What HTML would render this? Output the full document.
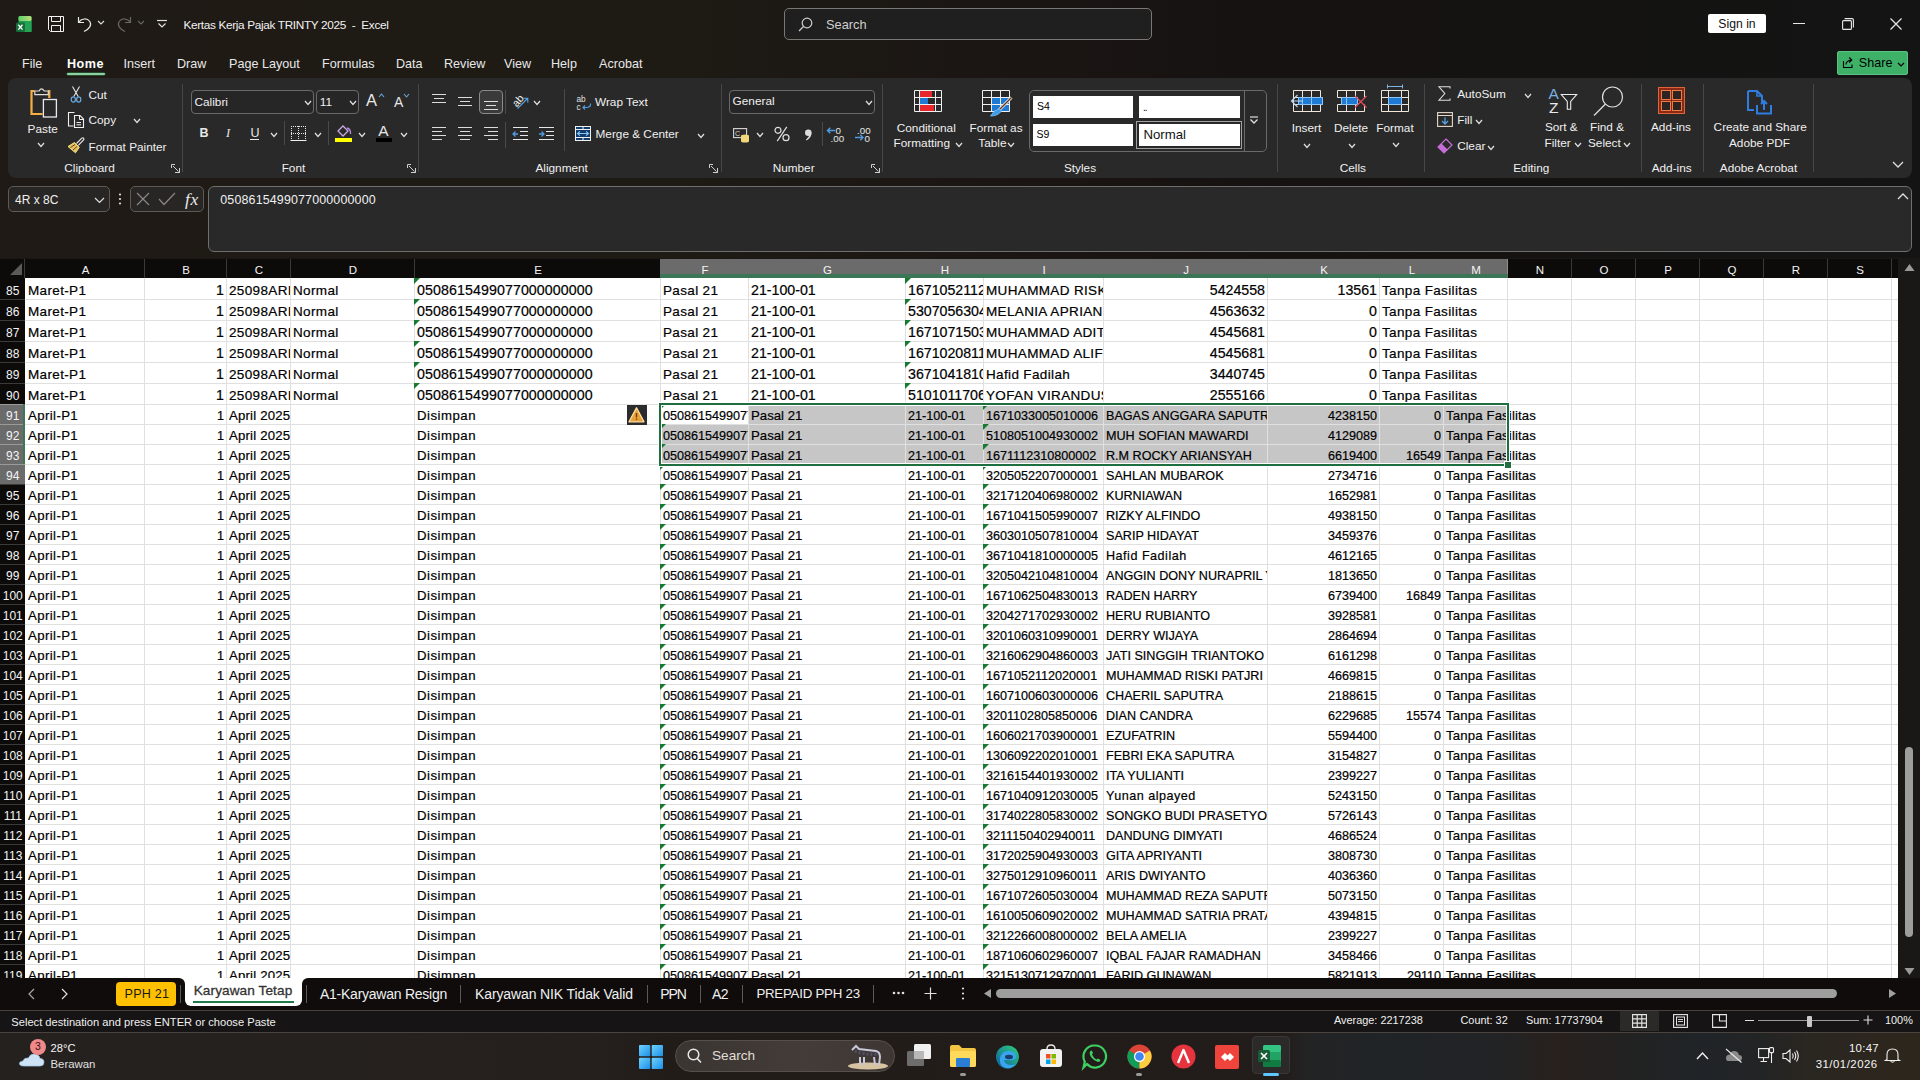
<!DOCTYPE html>
<html><head><meta charset="utf-8"><title>Excel</title><style>
*{margin:0;padding:0}
html,body{width:1920px;height:1080px;overflow:hidden;background:#1c1815;font-family:"Liberation Sans",sans-serif}
.tx{position:absolute;white-space:nowrap;line-height:1}
.ic{position:absolute;overflow:visible}
.hl{position:absolute;left:0;width:1873px;height:1px;background:#e0e0e0}
.vl{position:absolute;width:1px;background:#e0e0e0}
.c1,.c2{position:absolute;white-space:nowrap;overflow:hidden;color:#000;line-height:1;-webkit-text-stroke:0.2px #000}
.c1{font-size:13.5px;padding-top:6px;height:15px;letter-spacing:0.35px}
.c1.d{font-size:14.2px;padding-top:4.9px;letter-spacing:0}
.c2{font-size:13.2px;padding-top:4.8px;height:15px}
.c2.d{font-size:12.6px;padding-top:5.8px}
.c2.u{font-size:12.6px;padding-top:5.8px}
.r{text-align:right}
.tri{position:absolute;width:0;height:0;border-top:6px solid #177a30;border-right:6px solid transparent}
.ch{position:absolute;top:259px;height:15px;text-align:center;color:#f4f4f4;font-size:11.5px;line-height:1;padding-top:6px;padding-left:1px;box-sizing:content-box;height:13px}
.rh{position:absolute;left:0;width:25px}
.rh span{position:absolute;left:0;width:25.5px;text-align:center;color:#f4f4f4;font-size:12px;line-height:1}
</style></head>
<body>
<div style="position:absolute;left:0;top:0;width:1920px;height:258px;background:linear-gradient(90deg,#1f1a15 0%,#1e1a14 35%,#1a1513 55%,#161211 66%,#141312 80%,#141414 100%)"></div>
<svg class="ic" style="left:16px;top:16px" width="16" height="16" viewBox="0 0 16 16"><defs><linearGradient id="xg" x1="0" y1="0" x2="1" y2="0"><stop offset="0" stop-color="#5fcf6a"/><stop offset="1" stop-color="#b9e07a"/></linearGradient></defs><rect x="2.5" y="0" width="13" height="16" rx="1.5" fill="#1e9e4f"/><rect x="2.5" y="0" width="13" height="5" rx="1.5" fill="url(#xg)"/><rect x="9" y="5" width="6.5" height="11" fill="#23a455"/><rect x="0" y="6.5" width="9" height="9.5" rx="1.5" fill="#17703a"/><path d="M2.3 8.8 L6.5 13.6 M6.5 8.8 L2.3 13.6" stroke="#fff" stroke-width="1.3"/></svg>
<svg class="ic" style="left:48px;top:16px" width="16" height="16" viewBox="0 0 16 16"><path d="M0.5 0.5 H15.5 V15.5 H2.5 L0.5 13.5 Z" fill="none" stroke="#f2f2f2" stroke-width="1"/><path d="M3.5 0.5 V5.5 H12.5 V0.5" fill="none" stroke="#f2f2f2" stroke-width="1"/><path d="M3.5 15.5 V9.5 H12.5 V15.5" fill="none" stroke="#f2f2f2" stroke-width="1"/></svg>
<svg class="ic" style="left:77px;top:16px" width="15" height="16" viewBox="0 0 15 16"><path d="M1.5 1 V6.5 H7" fill="none" stroke="#e8e8e8" stroke-width="1.2"/><path d="M1.8 6.3 C4 2.5 10 1.5 12.8 5.5 C15 9 12.5 13 7 15.5" fill="none" stroke="#e8e8e8" stroke-width="1.2"/></svg>
<svg class="ic" style="left:97px;top:20px" width="8" height="5"><path d="M1 1 L4.0 4 L7 1" fill="none" stroke="#e0e0e0" stroke-width="1.1"/></svg>
<svg class="ic" style="left:117px;top:16px" width="15" height="16" viewBox="0 0 15 16"><path d="M13.5 1 V6.5 H8" fill="none" stroke="#6a6662" stroke-width="1.2"/><path d="M13.2 6.3 C11 2.5 5 1.5 2.2 5.5 C0 9 2.5 13 8 15.5" fill="none" stroke="#6a6662" stroke-width="1.2"/></svg>
<svg class="ic" style="left:137px;top:20px" width="8" height="5"><path d="M1 1 L4.0 4 L7 1" fill="none" stroke="#6a6662" stroke-width="1.1"/></svg>
<svg class="ic" style="left:156px;top:19px" width="12" height="10" viewBox="0 0 12 10"><path d="M1 1.5 H11" stroke="#e0e0e0" stroke-width="1.2"/><path d="M2.5 4.5 L6 8 L9.5 4.5" fill="none" stroke="#e0e0e0" stroke-width="1.2"/></svg>
<div class="tx" style="left:183.5px;top:20.00px;font-size:11.8px;color:#f2f2f2;font-weight:normal;letter-spacing:-0.34px">Kertas Kerja Pajak TRINTY 2025&nbsp;&nbsp;-&nbsp;&nbsp;Excel</div>
<div style="position:absolute;left:784px;top:8px;width:368px;height:32px;border:1px solid #7a7775;border-radius:5px;background:#1f1f1f;box-sizing:border-box"></div>
<svg class="ic" style="left:798px;top:17px" width="15" height="15" viewBox="0 0 15 15"><circle cx="9" cy="6" r="4.8" fill="none" stroke="#cfcfcf" stroke-width="1.2"/><path d="M5.5 9.5 L1 14" stroke="#cfcfcf" stroke-width="1.3"/></svg>
<div class="tx" style="left:826px;top:19.00px;font-size:12.8px;color:#cfcfcf;font-weight:normal;">Search</div>
<div style="position:absolute;left:1708px;top:14px;width:58px;height:19px;background:#fff;border-radius:2px"></div>
<div class="tx" style="left:1707.0px;width:60px;text-align:center;top:18.00px;font-size:12.2px;color:#111;">Sign in</div>
<div style="position:absolute;left:1793px;top:23px;width:12px;height:1px;background:#e8e8e8"></div>
<svg class="ic" style="left:1842px;top:18px" width="12" height="12" viewBox="0 0 12 12"><rect x="0.6" y="2.6" width="8.8" height="8.8" rx="1" fill="none" stroke="#e8e8e8" stroke-width="1.1"/><path d="M2.6 0.6 H10 Q11.4 0.6 11.4 2 V9.4" fill="none" stroke="#e8e8e8" stroke-width="1.1"/></svg>
<svg class="ic" style="left:1890px;top:18px" width="12" height="12" viewBox="0 0 12 12"><path d="M0.5 0.5 L11.5 11.5 M11.5 0.5 L0.5 11.5" stroke="#e8e8e8" stroke-width="1.2"/></svg>
<div class="tx" style="left:22px;top:58.00px;font-size:12.6px;color:#e8e8e8;font-weight:normal;">File</div>
<div class="tx" style="left:67px;top:58.00px;font-size:12.6px;color:#ffffff;font-weight:bold;letter-spacing:0.5px">Home</div>
<div class="tx" style="left:123.5px;top:58.00px;font-size:12.6px;color:#e8e8e8;font-weight:normal;">Insert</div>
<div class="tx" style="left:177px;top:58.00px;font-size:12.6px;color:#e8e8e8;font-weight:normal;">Draw</div>
<div class="tx" style="left:229px;top:58.00px;font-size:12.6px;color:#e8e8e8;font-weight:normal;">Page Layout</div>
<div class="tx" style="left:322px;top:58.00px;font-size:12.6px;color:#e8e8e8;font-weight:normal;">Formulas</div>
<div class="tx" style="left:396px;top:58.00px;font-size:12.6px;color:#e8e8e8;font-weight:normal;">Data</div>
<div class="tx" style="left:444px;top:58.00px;font-size:12.6px;color:#e8e8e8;font-weight:normal;">Review</div>
<div class="tx" style="left:504px;top:58.00px;font-size:12.6px;color:#e8e8e8;font-weight:normal;">View</div>
<div class="tx" style="left:551px;top:58.00px;font-size:12.6px;color:#e8e8e8;font-weight:normal;">Help</div>
<div class="tx" style="left:599px;top:58.00px;font-size:12.6px;color:#e8e8e8;font-weight:normal;">Acrobat</div>
<div style="position:absolute;left:67px;top:73px;width:38px;height:2px;border-radius:1px;background:#8fd0a2;box-shadow:0 0 0 0.5px #2f7a47"></div>
<div style="position:absolute;left:1837px;top:51px;width:71px;height:24px;background:#3fb068;border-radius:3px;box-shadow:inset 0 0 0 1px #5cc283"></div>
<svg class="ic" style="left:1842px;top:56px" width="13" height="13" viewBox="0 0 13 13"><path d="M1.5 5 V11.5 H10 V8.5" fill="none" stroke="#000" stroke-width="1.1"/><path d="M3.8 8.5 Q4.5 4.5 9.5 4 M7.2 1.5 L9.8 4 L7.2 6.5" fill="none" stroke="#000" stroke-width="1.1"/></svg>
<div class="tx" style="left:1858.8px;top:57.00px;font-size:12.6px;color:#000;font-weight:normal;">Share</div>
<svg class="ic" style="left:1897px;top:62px" width="8" height="5"><path d="M1 1 L4.0 4 L7 1" fill="none" stroke="#000" stroke-width="1.2"/></svg>
<div style="position:absolute;left:8px;top:78px;width:1904px;height:100px;background:#292929;border-radius:8px"></div>
<div style="position:absolute;left:182px;top:84px;width:1px;height:88px;background:#474747"></div>
<div style="position:absolute;left:418px;top:84px;width:1px;height:88px;background:#474747"></div>
<div style="position:absolute;left:721px;top:84px;width:1px;height:88px;background:#474747"></div>
<div style="position:absolute;left:882px;top:84px;width:1px;height:88px;background:#474747"></div>
<div style="position:absolute;left:1277px;top:84px;width:1px;height:88px;background:#474747"></div>
<div style="position:absolute;left:1424px;top:84px;width:1px;height:88px;background:#474747"></div>
<div style="position:absolute;left:1641px;top:84px;width:1px;height:88px;background:#474747"></div>
<div style="position:absolute;left:1703px;top:84px;width:1px;height:88px;background:#474747"></div>
<div style="position:absolute;left:1813px;top:84px;width:1px;height:88px;background:#474747"></div>
<div class="tx" style="left:29.599999999999994px;width:120px;text-align:center;top:163.00px;font-size:11.8px;color:#f0f0f0;">Clipboard</div>
<div class="tx" style="left:233.45000000000005px;width:120px;text-align:center;top:163.00px;font-size:11.8px;color:#f0f0f0;">Font</div>
<div class="tx" style="left:501.65px;width:120px;text-align:center;top:163.00px;font-size:11.8px;color:#f0f0f0;">Alignment</div>
<div class="tx" style="left:733.65px;width:120px;text-align:center;top:163.00px;font-size:11.8px;color:#f0f0f0;">Number</div>
<div class="tx" style="left:1020.0px;width:120px;text-align:center;top:163.00px;font-size:11.8px;color:#f0f0f0;">Styles</div>
<div class="tx" style="left:1292.9px;width:120px;text-align:center;top:163.00px;font-size:11.8px;color:#f0f0f0;">Cells</div>
<div class="tx" style="left:1471.25px;width:120px;text-align:center;top:163.00px;font-size:11.8px;color:#f0f0f0;">Editing</div>
<div class="tx" style="left:1611.7px;width:120px;text-align:center;top:163.00px;font-size:11.8px;color:#f0f0f0;">Add-ins</div>
<div class="tx" style="left:1698.5px;width:120px;text-align:center;top:163.00px;font-size:11.8px;color:#f0f0f0;">Adobe Acrobat</div>
<svg class="ic" style="left:171px;top:164px" width="9" height="9" viewBox="0 0 9 9"><path d="M0.5 0.5 H4 M0.5 0.5 V4 M8.5 4 V8.5 H4 M2 2 L7.5 7.5" fill="none" stroke="#cfcfcf" stroke-width="1"/><path d="M8.5 4.5 V8.5 H4.5" fill="none" stroke="#cfcfcf" stroke-width="1"/></svg>
<svg class="ic" style="left:407px;top:164px" width="9" height="9" viewBox="0 0 9 9"><path d="M0.5 0.5 H4 M0.5 0.5 V4 M8.5 4 V8.5 H4 M2 2 L7.5 7.5" fill="none" stroke="#cfcfcf" stroke-width="1"/><path d="M8.5 4.5 V8.5 H4.5" fill="none" stroke="#cfcfcf" stroke-width="1"/></svg>
<svg class="ic" style="left:709px;top:164px" width="9" height="9" viewBox="0 0 9 9"><path d="M0.5 0.5 H4 M0.5 0.5 V4 M8.5 4 V8.5 H4 M2 2 L7.5 7.5" fill="none" stroke="#cfcfcf" stroke-width="1"/><path d="M8.5 4.5 V8.5 H4.5" fill="none" stroke="#cfcfcf" stroke-width="1"/></svg>
<svg class="ic" style="left:871px;top:164px" width="9" height="9" viewBox="0 0 9 9"><path d="M0.5 0.5 H4 M0.5 0.5 V4 M8.5 4 V8.5 H4 M2 2 L7.5 7.5" fill="none" stroke="#cfcfcf" stroke-width="1"/><path d="M8.5 4.5 V8.5 H4.5" fill="none" stroke="#cfcfcf" stroke-width="1"/></svg>
<svg class="ic" style="left:29px;top:86px" width="29" height="32" viewBox="0 0 29 32"><path d="M5.5 5 H2.5 V28 H13.5" fill="none" stroke="#f5b043" stroke-width="2.2"/><path d="M19.2 5 H20.3 V12" fill="none" stroke="#f5b043" stroke-width="2.2"/><path d="M5.8 8.6 V5 H10 Q12.6 0.6 15.2 5 H19.3 V8.6 Z" fill="#292929" stroke="#e0dcd8" stroke-width="1.2"/><rect x="14.4" y="13.5" width="13" height="17.5" fill="#292929" stroke="#ece8f0" stroke-width="1.3"/></svg>
<div class="tx" style="left:27.6px;top:124.00px;font-size:11.8px;color:#f0f0f0;font-weight:normal;">Paste</div>
<svg class="ic" style="left:37px;top:142px" width="8" height="5.5"><path d="M1 1 L4.0 4.5 L7 1" fill="none" stroke="#e0e0e0" stroke-width="1.2"/></svg>
<svg class="ic" style="left:70px;top:86px" width="12" height="17" viewBox="0 0 12 17"><path d="M2.5 0.5 L8.2 10.5 M9.5 0.5 L3.8 10.5" stroke="#e6e6e6" stroke-width="1.1"/><ellipse cx="3.3" cy="13.5" rx="2.1" ry="2.7" fill="none" stroke="#6aa8de" stroke-width="1.2"/><ellipse cx="8.7" cy="13.5" rx="2.1" ry="2.7" fill="none" stroke="#6aa8de" stroke-width="1.2"/></svg>
<div class="tx" style="left:88.5px;top:90.00px;font-size:11.8px;color:#f0f0f0;font-weight:normal;">Cut</div>
<svg class="ic" style="left:67px;top:111px" width="18" height="18" viewBox="0 0 18 18"><path d="M7.5 1.5 H1.5 V15 H6.5" fill="none" stroke="#f0f0f0" stroke-width="1.1"/><path d="M7.5 4.5 H13 L16.5 8 V16.5 H7.5 Z" fill="none" stroke="#f0f0f0" stroke-width="1.1"/><path d="M12.5 4.5 V8.5 H16.5" fill="none" stroke="#f0f0f0" stroke-width="1"/><path d="M9.5 11.5 H14 M9.5 13.8 H14" stroke="#f0f0f0" stroke-width="1"/></svg>
<div class="tx" style="left:88.5px;top:115.00px;font-size:11.8px;color:#f0f0f0;font-weight:normal;">Copy</div>
<svg class="ic" style="left:133px;top:118px" width="8" height="5.5"><path d="M1 1 L4.0 4.5 L7 1" fill="none" stroke="#e0e0e0" stroke-width="1.2"/></svg>
<svg class="ic" style="left:67px;top:137px" width="18" height="17" viewBox="0 0 18 17"><path d="M9.5 6.5 L14.8 1.2 Q15.8 0.4 16.6 1.2 Q17.4 2 16.6 3 L11.3 8.3" fill="none" stroke="#ececec" stroke-width="1.1"/><path d="M7.5 5.5 L12.3 10.3 L8.5 15.8 L1 9.5 Z" fill="#e6c15a" stroke="#f7dc8a" stroke-width="1"/><path d="M3.5 10.5 L8 7.5 M6 13 L10 9.5" stroke="#4a3a18" stroke-width="0.9"/></svg>
<div class="tx" style="left:88.5px;top:142.00px;font-size:11.8px;color:#f0f0f0;font-weight:normal;">Format Painter</div>
<div style="position:absolute;left:191px;top:90px;width:123px;height:24px;border:1px solid #6a6a6a;border-radius:4px;box-sizing:border-box;background:#262626"></div>
<div class="tx" style="left:194.5px;top:97.00px;font-size:11.8px;color:#f0f0f0;font-weight:normal;">Calibri</div>
<svg class="ic" style="left:304px;top:100px" width="8" height="5.5"><path d="M1 1 L4.0 4.5 L7 1" fill="none" stroke="#e0e0e0" stroke-width="1.2"/></svg>
<div style="position:absolute;left:316px;top:90px;width:43px;height:24px;border:1px solid #6a6a6a;border-radius:4px;box-sizing:border-box;background:#262626"></div>
<div class="tx" style="left:319.8px;top:97.00px;font-size:11.8px;color:#f0f0f0;font-weight:normal;">11</div>
<svg class="ic" style="left:349px;top:100px" width="8" height="5.5"><path d="M1 1 L4.0 4.5 L7 1" fill="none" stroke="#e0e0e0" stroke-width="1.2"/></svg>
<div class="tx" style="left:366px;top:92.00px;font-size:16.5px;color:#e6e6e6;font-weight:normal;">A</div>
<svg class="ic" style="left:378px;top:93px" width="7" height="5" viewBox="0 0 7 5"><path d="M1 4 L3.5 1 L6 4" fill="none" stroke="#6ba7d9" stroke-width="1.1"/></svg>
<div class="tx" style="left:394px;top:95.00px;font-size:14px;color:#e6e6e6;font-weight:normal;">A</div>
<svg class="ic" style="left:403px;top:93px" width="7" height="5" viewBox="0 0 7 5"><path d="M1 1 L3.5 4 L6 1" fill="none" stroke="#6ba7d9" stroke-width="1.1"/></svg>
<div class="tx" style="left:199.5px;top:127.00px;font-size:12.5px;color:#e8e8e8;font-weight:bold;">B</div>
<div class="tx" style="left:226px;top:127.00px;font-size:12.5px;color:#e8e8e8;font-weight:normal;font-style:italic;font-family:'Liberation Serif'">I</div>
<div class="tx" style="left:250.5px;top:127.00px;font-size:12.5px;color:#e8e8e8;font-weight:normal;">U</div>
<div style="position:absolute;left:250px;top:139px;width:9px;height:1px;background:#e8e8e8"></div>
<svg class="ic" style="left:270px;top:132px" width="8" height="5.5"><path d="M1 1 L4.0 4.5 L7 1" fill="none" stroke="#e0e0e0" stroke-width="1.2"/></svg>
<div style="position:absolute;left:284px;top:121px;width:1px;height:24px;background:#4a4a4a"></div>
<svg class="ic" style="left:290px;top:125px" width="17" height="17" viewBox="0 0 17 17"><path d="M1.5 1 V15 M8.5 1 V15 M15.5 1 V15 M1 1.5 H16 M1 8.5 H16" stroke="#e6e6e6" stroke-width="1" stroke-dasharray="1 1" fill="none"/><path d="M0.5 15.5 H16.5" stroke="#f0f0f0" stroke-width="1"/></svg>
<svg class="ic" style="left:314px;top:132px" width="8" height="5.5"><path d="M1 1 L4.0 4.5 L7 1" fill="none" stroke="#e0e0e0" stroke-width="1.2"/></svg>
<div style="position:absolute;left:328px;top:121px;width:1px;height:24px;background:#4a4a4a"></div>
<svg class="ic" style="left:335px;top:124px" width="17" height="14" viewBox="0 0 17 14"><path d="M3 7 L8 2 L13 7 L8 12 Z" fill="none" stroke="#c9a8e8" stroke-width="1.3"/><path d="M12 4 Q16 5 15.5 10" fill="none" stroke="#b58fe0" stroke-width="1.3"/></svg>
<div style="position:absolute;left:335px;top:138px;width:17px;height:4px;background:#ffff00"></div>
<svg class="ic" style="left:358px;top:132px" width="8" height="5.5"><path d="M1 1 L4.0 4.5 L7 1" fill="none" stroke="#e0e0e0" stroke-width="1.2"/></svg>
<div class="tx" style="left:378.3px;top:123.00px;font-size:15.5px;color:#e6e6e6;font-weight:normal;">A</div>
<div style="position:absolute;left:376px;top:138px;width:16px;height:4px;background:#000"></div>
<svg class="ic" style="left:400px;top:132px" width="8" height="5.5"><path d="M1 1 L4.0 4.5 L7 1" fill="none" stroke="#e0e0e0" stroke-width="1.2"/></svg>
<svg class="ic" style="left:432px;top:94px" width="16" height="14" viewBox="0 0 16 14"><rect x="0" y="0" width="14" height="1" fill="#dcdcdc" shape-rendering="crispEdges"/><rect x="2" y="4" width="10" height="1" fill="#dcdcdc" shape-rendering="crispEdges"/><rect x="0" y="8" width="14" height="1" fill="#dcdcdc" shape-rendering="crispEdges"/></svg>
<svg class="ic" style="left:458px;top:97px" width="16" height="14" viewBox="0 0 16 14"><rect x="0" y="0" width="14" height="1" fill="#dcdcdc" shape-rendering="crispEdges"/><rect x="2" y="4" width="10" height="1" fill="#dcdcdc" shape-rendering="crispEdges"/><rect x="0" y="8" width="14" height="1" fill="#dcdcdc" shape-rendering="crispEdges"/></svg>
<div style="position:absolute;left:479px;top:90px;width:24px;height:24px;border:1px solid #8a8a8a;border-radius:4px;box-sizing:border-box;background:#3a3a3a"></div>
<svg class="ic" style="left:484px;top:101px" width="16" height="14" viewBox="0 0 16 14"><rect x="0" y="0" width="14" height="1" fill="#dcdcdc" shape-rendering="crispEdges"/><rect x="2" y="4" width="10" height="1" fill="#dcdcdc" shape-rendering="crispEdges"/><rect x="0" y="8" width="14" height="1" fill="#dcdcdc" shape-rendering="crispEdges"/></svg>
<div style="position:absolute;left:505px;top:90px;width:1px;height:24px;background:#4a4a4a"></div>
<svg class="ic" style="left:510px;top:92px" width="20" height="19" viewBox="0 0 20 19"><text x="2" y="13" font-size="10.5" fill="#f0f0f0" font-family="Liberation Sans" transform="rotate(-48 7 9)">ab</text><path d="M7.5 16.5 L17.5 6.5 M13.2 6.2 H17.8 V10.8" fill="none" stroke="#5aa3e8" stroke-width="1.1"/></svg>
<svg class="ic" style="left:533px;top:100px" width="8" height="5.5"><path d="M1 1 L4.0 4.5 L7 1" fill="none" stroke="#e0e0e0" stroke-width="1.2"/></svg>
<div style="position:absolute;left:564px;top:89px;width:1px;height:62px;background:#4a4a4a"></div>
<svg class="ic" style="left:576px;top:94px" width="17" height="17" viewBox="0 0 17 17"><text x="0.5" y="7.5" font-size="8.3" fill="#e0e0e0" font-family="Liberation Sans">ab</text><text x="0.5" y="15.5" font-size="8.3" fill="#e0e0e0" font-family="Liberation Sans">c</text><path d="M14.5 9.5 Q15 13.5 10 13.5 H7 M9 11.5 L7 13.5 L9 15.5" fill="none" stroke="#4f9be0" stroke-width="1.2"/></svg>
<div class="tx" style="left:595px;top:97.00px;font-size:11.8px;color:#f0f0f0;font-weight:normal;">Wrap Text</div>
<svg class="ic" style="left:432px;top:127px" width="16" height="18" viewBox="0 0 16 18"><rect x="0" y="0" width="14" height="1" fill="#dcdcdc" shape-rendering="crispEdges"/><rect x="0" y="4" width="10" height="1" fill="#dcdcdc" shape-rendering="crispEdges"/><rect x="0" y="8" width="14" height="1" fill="#dcdcdc" shape-rendering="crispEdges"/><rect x="0" y="12" width="10" height="1" fill="#dcdcdc" shape-rendering="crispEdges"/></svg>
<svg class="ic" style="left:458px;top:127px" width="16" height="18" viewBox="0 0 16 18"><rect x="0" y="0" width="14" height="1" fill="#dcdcdc" shape-rendering="crispEdges"/><rect x="2" y="4" width="10" height="1" fill="#dcdcdc" shape-rendering="crispEdges"/><rect x="0" y="8" width="14" height="1" fill="#dcdcdc" shape-rendering="crispEdges"/><rect x="2" y="12" width="10" height="1" fill="#dcdcdc" shape-rendering="crispEdges"/></svg>
<svg class="ic" style="left:484px;top:127px" width="16" height="18" viewBox="0 0 16 18"><rect x="0" y="0" width="14" height="1" fill="#dcdcdc" shape-rendering="crispEdges"/><rect x="4" y="4" width="10" height="1" fill="#dcdcdc" shape-rendering="crispEdges"/><rect x="0" y="8" width="14" height="1" fill="#dcdcdc" shape-rendering="crispEdges"/><rect x="4" y="12" width="10" height="1" fill="#dcdcdc" shape-rendering="crispEdges"/></svg>
<div style="position:absolute;left:505px;top:122px;width:1px;height:26px;background:#4a4a4a"></div>
<svg class="ic" style="left:512px;top:127px" width="16" height="15" viewBox="0 0 16 15"><rect x="0.5" y="0" width="15" height="1" fill="#e6e6e6" shape-rendering="crispEdges"/><rect x="8" y="4" width="7.5" height="1" fill="#e6e6e6" shape-rendering="crispEdges"/><rect x="8" y="8" width="7.5" height="1" fill="#e6e6e6" shape-rendering="crispEdges"/><rect x="0.5" y="12" width="15" height="1" fill="#e6e6e6" shape-rendering="crispEdges"/><path d="M6 7 H1 M3.5 4.5 L1 7 L3.5 9.5" fill="none" stroke="#4f9be0" stroke-width="1.3"/></svg>
<svg class="ic" style="left:538px;top:127px" width="16" height="15" viewBox="0 0 16 15"><rect x="0.5" y="0" width="15" height="1" fill="#e6e6e6" shape-rendering="crispEdges"/><rect x="8" y="4" width="7.5" height="1" fill="#e6e6e6" shape-rendering="crispEdges"/><rect x="8" y="8" width="7.5" height="1" fill="#e6e6e6" shape-rendering="crispEdges"/><rect x="0.5" y="12" width="15" height="1" fill="#e6e6e6" shape-rendering="crispEdges"/><path d="M1 7 H6 M3.5 4.5 L6 7 L3.5 9.5" fill="none" stroke="#4f9be0" stroke-width="1.3"/></svg>
<svg class="ic" style="left:574px;top:125px" width="18" height="17" viewBox="0 0 18 17"><rect x="1.5" y="1.5" width="15" height="14" fill="#0f3d6b" stroke="#f0f0f0" stroke-width="1"/><path d="M1.5 4.5 H16.5 M1.5 12.5 H16.5 M9 1.5 V4.5 M9 12.5 V15.5" stroke="#f0f0f0" stroke-width="1"/><path d="M3.5 8.5 H14.5 M6 6.3 L3.5 8.5 L6 10.7 M12 6.3 L14.5 8.5 L12 10.7" fill="none" stroke="#8cc4f5" stroke-width="1.1"/></svg>
<div class="tx" style="left:595.5px;top:129.00px;font-size:11.8px;color:#f0f0f0;font-weight:normal;">Merge &amp; Center</div>
<svg class="ic" style="left:697px;top:132.5px" width="8" height="5.5"><path d="M1 1 L4.0 4.5 L7 1" fill="none" stroke="#e0e0e0" stroke-width="1.2"/></svg>
<div style="position:absolute;left:729px;top:90px;width:146px;height:24px;border:1px solid #6a6a6a;border-radius:4px;box-sizing:border-box;background:#262626"></div>
<div class="tx" style="left:732.6px;top:96.00px;font-size:11.8px;color:#f0f0f0;font-weight:normal;">General</div>
<svg class="ic" style="left:865px;top:100px" width="8" height="5.5"><path d="M1 1 L4.0 4.5 L7 1" fill="none" stroke="#e0e0e0" stroke-width="1.2"/></svg>
<svg class="ic" style="left:733px;top:128px" width="17" height="15" viewBox="0 0 17 15"><rect x="0.6" y="0.6" width="13" height="9" fill="none" stroke="#d8d8d8" stroke-width="1.1"/><text x="2" y="8" font-size="7" fill="#d8d8d8" font-family="Liberation Sans">C</text><ellipse cx="12" cy="8" rx="4" ry="1.5" fill="#f0d77a"/><rect x="8" y="8" width="8" height="5" fill="#f0d77a"/><ellipse cx="12" cy="13" rx="4" ry="1.5" fill="#f0d77a"/></svg>
<svg class="ic" style="left:756px;top:132px" width="8" height="5.5"><path d="M1 1 L4.0 4.5 L7 1" fill="none" stroke="#e0e0e0" stroke-width="1.2"/></svg>
<svg class="ic" style="left:774px;top:126px" width="16" height="16" viewBox="0 0 16 16"><circle cx="4" cy="4.3" r="3" fill="none" stroke="#e0e0e0" stroke-width="1.2"/><circle cx="12" cy="11.7" r="3" fill="none" stroke="#e0e0e0" stroke-width="1.2"/><path d="M12.8 0.8 L3.2 15.2" stroke="#e0e0e0" stroke-width="1.2"/></svg>
<svg class="ic" style="left:804px;top:129px" width="9" height="12" viewBox="0 0 9 12"><circle cx="4.3" cy="3.8" r="3.3" fill="#dcdcdc"/><path d="M7.4 4 Q7.6 9 2.5 11.5 L2 10.6 Q5 8.5 5.2 6" fill="#dcdcdc"/></svg>
<div style="position:absolute;left:822px;top:122px;width:1px;height:24px;background:#4a4a4a"></div>
<svg class="ic" style="left:826px;top:126px" width="19" height="16" viewBox="0 0 19 16"><text x="9.5" y="7.5" font-size="9.8" fill="#e6e6e6" font-family="Liberation Sans">0</text><text x="4.5" y="15.6" font-size="9.8" fill="#e6e6e6" font-family="Liberation Sans">.00</text><path d="M9 4.5 H1.5 M4.3 1.7 L1.5 4.5 L4.3 7.3" fill="none" stroke="#4f9be0" stroke-width="1.4"/></svg>
<svg class="ic" style="left:851px;top:126px" width="20" height="16" viewBox="0 0 20 16"><text x="6" y="7.5" font-size="9.8" fill="#e6e6e6" font-family="Liberation Sans">.00</text><text x="13.5" y="15.6" font-size="9.8" fill="#e6e6e6" font-family="Liberation Sans">0</text><path d="M4 11.5 H12 M9.3 8.7 L12 11.5 L9.3 14.3" fill="none" stroke="#4f9be0" stroke-width="1.4"/></svg>
<svg class="ic" style="left:914px;top:90px" width="28" height="22" viewBox="0 0 28 22"><rect x="6" y="1" width="12" height="6" fill="#e8262b"/><rect x="6" y="8" width="8" height="6" fill="#1f7ad6"/><rect x="6" y="15" width="14" height="6" fill="#e8262b"/><path d="M0.5 0.5 H27.5 V21.5 H0.5 Z M0.5 7.5 H27.5 M0.5 14.5 H27.5 M5.5 0.5 V21.5 M21.5 0.5 V21.5" fill="none" stroke="#f0f0f0" stroke-width="1"/></svg>
<div class="tx" style="left:881.3px;width:90px;text-align:center;top:123.00px;font-size:11.8px;color:#f0f0f0;">Conditional</div>
<div class="tx" style="left:893.6px;top:138.00px;font-size:11.8px;color:#f0f0f0;font-weight:normal;">Formatting</div>
<svg class="ic" style="left:955px;top:142px" width="8" height="5.5"><path d="M1 1 L4.0 4.5 L7 1" fill="none" stroke="#e0e0e0" stroke-width="1.2"/></svg>
<svg class="ic" style="left:982px;top:90px" width="32" height="28" viewBox="0 0 32 28"><rect x="9.5" y="7.5" width="18" height="14" fill="#1f7ad6"/><path d="M0.5 0.5 H27.5 V21.5 H0.5 Z M0.5 7.5 H27.5 M0.5 14.5 H27.5 M9.5 0.5 V21.5 M18.5 0.5 V21.5" fill="none" stroke="#f0f0f0" stroke-width="1"/><path d="M29.5 7.5 L17 20" stroke="#f0e6dc" stroke-width="3"/><path d="M29.5 7.5 L17 20" stroke="#5a3a20" stroke-width="1.2"/><path d="M17.5 19 Q12 19.5 8.5 26 Q16 26 19.5 21 Z" fill="#3d9be9" stroke="#7cc0f5" stroke-width="0.8"/></svg>
<div class="tx" style="left:951.0px;width:90px;text-align:center;top:123.00px;font-size:11.8px;color:#f0f0f0;">Format as</div>
<div class="tx" style="left:978.3px;top:138.00px;font-size:11.8px;color:#f0f0f0;font-weight:normal;">Table</div>
<svg class="ic" style="left:1007px;top:142px" width="8" height="5.5"><path d="M1 1 L4.0 4.5 L7 1" fill="none" stroke="#e0e0e0" stroke-width="1.2"/></svg>
<div style="position:absolute;left:1029px;top:90px;width:238px;height:62px;border:1px solid #6a6a6a;border-radius:5px;box-sizing:border-box"></div>
<div style="position:absolute;left:1244px;top:90px;width:1px;height:62px;background:#6a6a6a"></div>
<div style="position:absolute;left:1033px;top:96px;width:100px;height:22px;background:#fff"></div>
<div style="position:absolute;left:1139px;top:96px;width:101px;height:22px;background:#fff"></div>
<div style="position:absolute;left:1033px;top:124px;width:100px;height:22px;background:#fff"></div>
<div style="position:absolute;left:1136px;top:121px;width:106px;height:28px;border:1px solid #a0a0a0;box-sizing:border-box"></div>
<div style="position:absolute;left:1139px;top:124px;width:101px;height:22px;background:#fff"></div>
<div class="tx" style="left:1037px;top:101.00px;font-size:10.5px;color:#000;font-weight:normal;">S4</div>
<div class="tx" style="left:1143px;top:103.00px;font-size:10px;color:#000;font-weight:normal;letter-spacing:-1px">..</div>
<div class="tx" style="left:1036.5px;top:129.00px;font-size:10.5px;color:#000;font-weight:normal;">S9</div>
<div class="tx" style="left:1143.5px;top:128.00px;font-size:13.2px;color:#111;font-weight:normal;">Normal</div>
<svg class="ic" style="left:1249px;top:116px" width="10" height="9" viewBox="0 0 10 9"><path d="M1 1 H9" stroke="#e0e0e0" stroke-width="1.2"/><path d="M1.5 3.5 L5 7 L8.5 3.5" fill="none" stroke="#e0e0e0" stroke-width="1.3"/></svg>
<svg class="ic" style="left:1290px;top:88px" width="36" height="26" viewBox="0 0 36 26"><path d="M3.5 2.5 H30.5 V23.5 H3.5 Z M3.5 9.5 H30.5 M3.5 16.5 H30.5 M12.5 2.5 V23.5 M21.5 2.5 V23.5" fill="none" stroke="#efe6dc" stroke-width="1"/><rect x="8.5" y="9.5" width="24" height="7" fill="#1f7ad6" stroke="#8cc4f5" stroke-width="1"/><path d="M12.5 9.5 V16.5 M21.5 9.5 V16.5" stroke="#8cc4f5" stroke-width="1"/><path d="M13 13 H1.5 M7.5 7 L1.5 13 L7.5 19" fill="none" stroke="#b9d6ee" stroke-width="1.2"/></svg>
<div class="tx" style="left:1276.5px;width:60px;text-align:center;top:123.00px;font-size:11.8px;color:#f0f0f0;">Insert</div>
<svg class="ic" style="left:1303px;top:142.5px" width="8" height="5.5"><path d="M1 1 L4.0 4.5 L7 1" fill="none" stroke="#e0e0e0" stroke-width="1.2"/></svg>
<svg class="ic" style="left:1335px;top:88px" width="34" height="26" viewBox="0 0 34 26"><path d="M6.5 9.5 H2.5 V2.5 H29.5 V9.5 M6.5 16.5 H2.5 V23.5 H29.5 V16.5 M11.5 2.5 V9.5 M20.5 2.5 V9.5 M11.5 16.5 V23.5 M20.5 16.5 V23.5" fill="none" stroke="#efe6dc" stroke-width="1"/><rect x="6.5" y="9.5" width="16" height="7" fill="#1f7ad6" stroke="#8cc4f5" stroke-width="1"/><path d="M11.5 9.5 V16.5" stroke="#8cc4f5" stroke-width="1"/><path d="M20 8 L31.5 19.5 M31.5 8 L20 19.5" stroke="#e24b5a" stroke-width="1.3"/></svg>
<div class="tx" style="left:1321.0px;width:60px;text-align:center;top:123.00px;font-size:11.8px;color:#f0f0f0;">Delete</div>
<svg class="ic" style="left:1348px;top:142.5px" width="8" height="5.5"><path d="M1 1 L4.0 4.5 L7 1" fill="none" stroke="#e0e0e0" stroke-width="1.2"/></svg>
<svg class="ic" style="left:1380px;top:84px" width="30" height="28" viewBox="0 0 30 28"><path d="M7 2.5 H22.5 M7.5 0.5 V4.5 M22.5 0.5 V4.5" stroke="#7fb6e6" stroke-width="1"/><path d="M1.5 6.5 H28.5 V27.5 H1.5 Z M1.5 13.5 H28.5 M1.5 20.5 H28.5 M8.5 6.5 V27.5 M21.5 6.5 V27.5" fill="none" stroke="#efe6dc" stroke-width="1"/><rect x="8.5" y="13.5" width="13" height="7" fill="#1f7ad6" stroke="#8cc4f5" stroke-width="1"/></svg>
<div class="tx" style="left:1365.0px;width:60px;text-align:center;top:123.00px;font-size:11.8px;color:#f0f0f0;">Format</div>
<svg class="ic" style="left:1391.5px;top:142px" width="8" height="5.5"><path d="M1 1 L4.0 4.5 L7 1" fill="none" stroke="#e0e0e0" stroke-width="1.2"/></svg>
<svg class="ic" style="left:1438px;top:86px" width="13" height="15" viewBox="0 0 13 15"><path d="M12 2.5 V0.8 H1 L6.8 7.5 L1 14.2 H12 V12.5" fill="none" stroke="#e0e0e0" stroke-width="1.1"/></svg>
<div class="tx" style="left:1457.2px;top:89.00px;font-size:11.8px;color:#f0f0f0;font-weight:normal;">AutoSum</div>
<svg class="ic" style="left:1524px;top:92.5px" width="8" height="5.5"><path d="M1 1 L4.0 4.5 L7 1" fill="none" stroke="#e0e0e0" stroke-width="1.2"/></svg>
<svg class="ic" style="left:1437px;top:112px" width="16" height="15" viewBox="0 0 16 15"><rect x="0.6" y="0.6" width="14.8" height="13.8" fill="none" stroke="#e6d8c8" stroke-width="1.1"/><path d="M0.6 3.5 H15.4" stroke="#e6d8c8" stroke-width="1"/><path d="M8 5.5 V12 M5 9 L8 12 L11 9" fill="none" stroke="#5aa3e8" stroke-width="1.3"/></svg>
<div class="tx" style="left:1457.2px;top:115.00px;font-size:11.8px;color:#f0f0f0;font-weight:normal;">Fill</div>
<svg class="ic" style="left:1475px;top:119px" width="8" height="5.5"><path d="M1 1 L4.0 4.5 L7 1" fill="none" stroke="#e0e0e0" stroke-width="1.2"/></svg>
<svg class="ic" style="left:1437px;top:138px" width="16" height="16" viewBox="0 0 16 16"><path d="M9 1 L15 7 L7 15 L1 9 Z" fill="none" stroke="#c86dd7" stroke-width="1.2"/><path d="M4.5 5.5 L10.5 11.5 L7 15 L1 9 Z" fill="#c86dd7"/></svg>
<div class="tx" style="left:1457.2px;top:141.00px;font-size:11.8px;color:#f0f0f0;font-weight:normal;">Clear</div>
<svg class="ic" style="left:1487px;top:145px" width="8" height="5.5"><path d="M1 1 L4.0 4.5 L7 1" fill="none" stroke="#e0e0e0" stroke-width="1.2"/></svg>
<div class="tx" style="left:1548.5px;top:86.00px;font-size:15.5px;color:#79b0e0;font-weight:normal;">A</div>
<div class="tx" style="left:1549px;top:100.00px;font-size:15.5px;color:#ececec;font-weight:normal;">Z</div>
<svg class="ic" style="left:1560px;top:93px" width="18" height="18" viewBox="0 0 18 18"><path d="M1.3 1.5 H16.7 L10.7 8.5 V16.3 H7.3 V8.5 Z" fill="none" stroke="#ececec" stroke-width="1.1"/></svg>
<div class="tx" style="left:1531.3px;width:60px;text-align:center;top:122.00px;font-size:11.8px;color:#f0f0f0;">Sort &amp;</div>
<div class="tx" style="left:1544.5px;top:138.00px;font-size:11.8px;color:#f0f0f0;font-weight:normal;">Filter</div>
<svg class="ic" style="left:1573.5px;top:142px" width="8" height="5.5"><path d="M1 1 L4.0 4.5 L7 1" fill="none" stroke="#e0e0e0" stroke-width="1.2"/></svg>
<svg class="ic" style="left:1593px;top:86px" width="32" height="31" viewBox="0 0 32 31"><circle cx="19.5" cy="11" r="10" fill="none" stroke="#e0e0e0" stroke-width="1.2"/><path d="M12.5 18 L1 29.5" stroke="#e0e0e0" stroke-width="1.2"/></svg>
<div class="tx" style="left:1577.0px;width:60px;text-align:center;top:122.00px;font-size:11.8px;color:#f0f0f0;">Find &amp;</div>
<div class="tx" style="left:1588px;top:138.00px;font-size:11.8px;color:#f0f0f0;font-weight:normal;">Select</div>
<svg class="ic" style="left:1623px;top:142px" width="8" height="5.5"><path d="M1 1 L4.0 4.5 L7 1" fill="none" stroke="#e0e0e0" stroke-width="1.2"/></svg>
<svg class="ic" style="left:1657px;top:86px" width="29" height="29" viewBox="0 0 29 29"><rect x="1.5" y="1.5" width="26" height="26" fill="#8a2a14" stroke="#e0643a" stroke-width="1"/><rect x="4.5" y="4.5" width="9" height="9" fill="#2b2420" stroke="#ee7a48" stroke-width="1"/><rect x="15.5" y="4.5" width="9" height="9" fill="#2b2420" stroke="#ee7a48" stroke-width="1"/><rect x="4.5" y="15.5" width="9" height="9" fill="#2b2420" stroke="#ee7a48" stroke-width="1"/><rect x="15.5" y="15.5" width="9" height="9" fill="#2b2420" stroke="#ee7a48" stroke-width="1"/></svg>
<div class="tx" style="left:1631.0px;width:80px;text-align:center;top:122.00px;font-size:11.8px;color:#f0f0f0;">Add-ins</div>
<svg class="ic" style="left:1747px;top:90px" width="26" height="25" viewBox="0 0 26 25"><path d="M1 1 H10 L15 6 V12" fill="none" stroke="#2f7de1" stroke-width="2"/><path d="M1 1 V20 H7" fill="none" stroke="#2f7de1" stroke-width="2"/><path d="M10 1 V6 H15" fill="none" stroke="#2f7de1" stroke-width="1.6"/><path d="M10 15 V23.5 H24 V15 M17 20 V11 M14 14 L17 11 L20 14" fill="none" stroke="#2f7de1" stroke-width="2"/></svg>
<div class="tx" style="left:1700.2px;width:120px;text-align:center;top:122.00px;font-size:11.8px;color:#f0f0f0;">Create and Share</div>
<div class="tx" style="left:1699.5px;width:120px;text-align:center;top:138.00px;font-size:11.8px;color:#f0f0f0;">Adobe PDF</div>
<svg class="ic" style="left:1892px;top:161px" width="12" height="7"><path d="M1 1 L6.0 6 L11 1" fill="none" stroke="#e0e0e0" stroke-width="1.3"/></svg>
<div style="position:absolute;left:8px;top:186px;width:102px;height:26px;border:1px solid #5e5955;border-radius:5px;box-sizing:border-box;background:#282624"></div>
<div class="tx" style="left:15px;top:194.00px;font-size:12px;color:#f0f0f0;font-weight:normal;">4R x 8C</div>
<svg class="ic" style="left:94px;top:197px" width="11" height="7" viewBox="0 0 11 7"><path d="M1 1 L5.5 5.5 L10 1" fill="none" stroke="#e0e0e0" stroke-width="1.2"/></svg>
<svg class="ic" style="left:118px;top:193px" width="4" height="12" viewBox="0 0 4 12"><circle cx="2" cy="1.5" r="1.1" fill="#e0e0e0"/><circle cx="2" cy="6" r="1.1" fill="#e0e0e0"/><circle cx="2" cy="10.5" r="1.1" fill="#e0e0e0"/></svg>
<div style="position:absolute;left:130px;top:186px;width:74px;height:26px;border:1px solid #5e5955;border-radius:5px;box-sizing:border-box;background:#282624"></div>
<svg class="ic" style="left:136px;top:192px" width="14" height="14" viewBox="0 0 14 14"><path d="M1 1 L13 13 M13 1 L1 13" stroke="#8a8784" stroke-width="1.2"/></svg>
<svg class="ic" style="left:158px;top:192px" width="18" height="14" viewBox="0 0 18 14"><path d="M1 7 L6 12.5 L17 1" fill="none" stroke="#8a8784" stroke-width="1.2"/></svg>
<div class="tx" style="left:185px;top:191.00px;font-size:17.5px;color:#ececec;font-weight:normal;font-family:'Liberation Serif';letter-spacing:0.6px"><i>fx</i></div>
<div style="position:absolute;left:208px;top:186px;width:1704px;height:66px;border:1px solid #6e6e6e;border-radius:6px;box-sizing:border-box;background:#292929"></div>
<div class="tx" style="left:220.3px;top:194.00px;font-size:12.45px;color:#f0f0f0;font-weight:normal;letter-spacing:0.15px">0508615499077000000000</div>
<svg class="ic" style="left:1897px;top:193px" width="12" height="7" viewBox="0 0 12 7"><path d="M1 6 L6 1 L11 6" fill="none" stroke="#e0e0e0" stroke-width="1.3"/></svg>
<div style="position:absolute;left:1898px;top:258px;width:22px;height:720px;background:#1a1816"></div>
<svg class="ic" style="left:1904px;top:263px" width="11" height="9" viewBox="0 0 11 9"><path d="M5.5 1 L10.5 8 H0.5 Z" fill="#9a9a9a"/></svg>
<svg class="ic" style="left:1904px;top:967px" width="11" height="9" viewBox="0 0 11 9"><path d="M5.5 8 L10.5 1 H0.5 Z" fill="#9a9a9a"/></svg>
<div style="position:absolute;left:1905px;top:747px;width:8px;height:190px;border-radius:4px;background:#9d9d9d"></div>
<div style="position:absolute;left:0;top:259px;width:1898px;height:19px;background:#0d0b0a"></div>
<svg style="position:absolute;left:0;top:258px" width="25" height="20"><path d="M22 5 L22 17 L10 17 Z" fill="#5a5a5a"/></svg>
<div class="ch" style="left:25px;width:119px;">A</div>
<div style="position:absolute;left:144px;top:259px;width:1px;height:19px;background:#3a3a3a"></div>
<div class="ch" style="left:144px;width:82px;">B</div>
<div style="position:absolute;left:226px;top:259px;width:1px;height:19px;background:#3a3a3a"></div>
<div class="ch" style="left:226px;width:64px;">C</div>
<div style="position:absolute;left:290px;top:259px;width:1px;height:19px;background:#3a3a3a"></div>
<div class="ch" style="left:290px;width:124px;">D</div>
<div style="position:absolute;left:414px;top:259px;width:1px;height:19px;background:#3a3a3a"></div>
<div class="ch" style="left:414px;width:246px;">E</div>
<div style="position:absolute;left:660px;top:259px;width:1px;height:19px;background:#3a3a3a"></div>
<div class="ch" style="left:660px;width:88px;background:#6b6b6b;">F</div>
<div style="position:absolute;left:748px;top:259px;width:1px;height:15px;background:#8d8d8d"></div>
<div class="ch" style="left:748px;width:157px;background:#6b6b6b;">G</div>
<div style="position:absolute;left:905px;top:259px;width:1px;height:15px;background:#8d8d8d"></div>
<div class="ch" style="left:905px;width:78px;background:#6b6b6b;">H</div>
<div style="position:absolute;left:983px;top:259px;width:1px;height:15px;background:#8d8d8d"></div>
<div class="ch" style="left:983px;width:120px;background:#6b6b6b;">I</div>
<div style="position:absolute;left:1103px;top:259px;width:1px;height:15px;background:#8d8d8d"></div>
<div class="ch" style="left:1103px;width:164px;background:#6b6b6b;">J</div>
<div style="position:absolute;left:1267px;top:259px;width:1px;height:15px;background:#8d8d8d"></div>
<div class="ch" style="left:1267px;width:112px;background:#6b6b6b;">K</div>
<div style="position:absolute;left:1379px;top:259px;width:1px;height:15px;background:#8d8d8d"></div>
<div class="ch" style="left:1379px;width:64px;background:#6b6b6b;">L</div>
<div style="position:absolute;left:1443px;top:259px;width:1px;height:15px;background:#8d8d8d"></div>
<div class="ch" style="left:1443px;width:64px;background:#6b6b6b;">M</div>
<div style="position:absolute;left:1507px;top:259px;width:1px;height:15px;background:#8d8d8d"></div>
<div class="ch" style="left:1507px;width:64px;">N</div>
<div style="position:absolute;left:1571px;top:259px;width:1px;height:19px;background:#3a3a3a"></div>
<div class="ch" style="left:1571px;width:64px;">O</div>
<div style="position:absolute;left:1635px;top:259px;width:1px;height:19px;background:#3a3a3a"></div>
<div class="ch" style="left:1635px;width:64px;">P</div>
<div style="position:absolute;left:1699px;top:259px;width:1px;height:19px;background:#3a3a3a"></div>
<div class="ch" style="left:1699px;width:64px;">Q</div>
<div style="position:absolute;left:1763px;top:259px;width:1px;height:19px;background:#3a3a3a"></div>
<div class="ch" style="left:1763px;width:64px;">R</div>
<div style="position:absolute;left:1827px;top:259px;width:1px;height:19px;background:#3a3a3a"></div>
<div class="ch" style="left:1827px;width:64px;">S</div>
<div style="position:absolute;left:1891px;top:259px;width:1px;height:19px;background:#3a3a3a"></div>
<div style="position:absolute;left:660px;top:274px;width:847px;height:4px;background:#3b7657"></div>
<div style="position:absolute;left:24px;top:259px;width:1px;height:19px;background:#3a3a3a"></div>
<div style="position:absolute;left:0;top:278px;width:25px;height:700px;background:#0d0b0a;overflow:hidden">
<div class="rh" style="top:0px;height:21px;"><span style="top:7px">85</span></div>
<div class="rh" style="top:21px;height:21px;"><span style="top:7px">86</span></div>
<div class="rh" style="top:42px;height:21px;"><span style="top:7px">87</span></div>
<div class="rh" style="top:63px;height:21px;"><span style="top:7px">88</span></div>
<div class="rh" style="top:84px;height:21px;"><span style="top:7px">89</span></div>
<div class="rh" style="top:105px;height:21px;"><span style="top:7px">90</span></div>
<div class="rh" style="top:126px;height:20px;background:#6b6b6b;"><span style="top:6px">91</span></div>
<div class="rh" style="top:146px;height:20px;background:#6b6b6b;"><span style="top:6px">92</span></div>
<div class="rh" style="top:166px;height:20px;background:#6b6b6b;"><span style="top:6px">93</span></div>
<div class="rh" style="top:186px;height:20px;background:#6b6b6b;"><span style="top:6px">94</span></div>
<div class="rh" style="top:206px;height:20px;"><span style="top:6px">95</span></div>
<div class="rh" style="top:226px;height:20px;"><span style="top:6px">96</span></div>
<div class="rh" style="top:246px;height:20px;"><span style="top:6px">97</span></div>
<div class="rh" style="top:266px;height:20px;"><span style="top:6px">98</span></div>
<div class="rh" style="top:286px;height:20px;"><span style="top:6px">99</span></div>
<div class="rh" style="top:306px;height:20px;"><span style="top:6px">100</span></div>
<div class="rh" style="top:326px;height:20px;"><span style="top:6px">101</span></div>
<div class="rh" style="top:346px;height:20px;"><span style="top:6px">102</span></div>
<div class="rh" style="top:366px;height:20px;"><span style="top:6px">103</span></div>
<div class="rh" style="top:386px;height:20px;"><span style="top:6px">104</span></div>
<div class="rh" style="top:406px;height:20px;"><span style="top:6px">105</span></div>
<div class="rh" style="top:426px;height:20px;"><span style="top:6px">106</span></div>
<div class="rh" style="top:446px;height:20px;"><span style="top:6px">107</span></div>
<div class="rh" style="top:466px;height:20px;"><span style="top:6px">108</span></div>
<div class="rh" style="top:486px;height:20px;"><span style="top:6px">109</span></div>
<div class="rh" style="top:506px;height:20px;"><span style="top:6px">110</span></div>
<div class="rh" style="top:526px;height:20px;"><span style="top:6px">111</span></div>
<div class="rh" style="top:546px;height:20px;"><span style="top:6px">112</span></div>
<div class="rh" style="top:566px;height:20px;"><span style="top:6px">113</span></div>
<div class="rh" style="top:586px;height:20px;"><span style="top:6px">114</span></div>
<div class="rh" style="top:606px;height:20px;"><span style="top:6px">115</span></div>
<div class="rh" style="top:626px;height:20px;"><span style="top:6px">116</span></div>
<div class="rh" style="top:646px;height:20px;"><span style="top:6px">117</span></div>
<div class="rh" style="top:666px;height:20px;"><span style="top:6px">118</span></div>
<div class="rh" style="top:686px;height:20px;"><span style="top:6px">119</span></div>
<div style="position:absolute;left:0;top:21px;width:25px;height:1px;background:#3a3a3a"></div>
<div style="position:absolute;left:0;top:42px;width:25px;height:1px;background:#3a3a3a"></div>
<div style="position:absolute;left:0;top:63px;width:25px;height:1px;background:#3a3a3a"></div>
<div style="position:absolute;left:0;top:84px;width:25px;height:1px;background:#3a3a3a"></div>
<div style="position:absolute;left:0;top:105px;width:25px;height:1px;background:#3a3a3a"></div>
<div style="position:absolute;left:0;top:126px;width:25px;height:1px;background:#9a9a9a"></div>
<div style="position:absolute;left:0;top:146px;width:25px;height:1px;background:#9a9a9a"></div>
<div style="position:absolute;left:0;top:166px;width:25px;height:1px;background:#9a9a9a"></div>
<div style="position:absolute;left:0;top:186px;width:25px;height:1px;background:#9a9a9a"></div>
<div style="position:absolute;left:0;top:206px;width:25px;height:1px;background:#3a3a3a"></div>
<div style="position:absolute;left:0;top:226px;width:25px;height:1px;background:#3a3a3a"></div>
<div style="position:absolute;left:0;top:246px;width:25px;height:1px;background:#3a3a3a"></div>
<div style="position:absolute;left:0;top:266px;width:25px;height:1px;background:#3a3a3a"></div>
<div style="position:absolute;left:0;top:286px;width:25px;height:1px;background:#3a3a3a"></div>
<div style="position:absolute;left:0;top:306px;width:25px;height:1px;background:#3a3a3a"></div>
<div style="position:absolute;left:0;top:326px;width:25px;height:1px;background:#3a3a3a"></div>
<div style="position:absolute;left:0;top:346px;width:25px;height:1px;background:#3a3a3a"></div>
<div style="position:absolute;left:0;top:366px;width:25px;height:1px;background:#3a3a3a"></div>
<div style="position:absolute;left:0;top:386px;width:25px;height:1px;background:#3a3a3a"></div>
<div style="position:absolute;left:0;top:406px;width:25px;height:1px;background:#3a3a3a"></div>
<div style="position:absolute;left:0;top:426px;width:25px;height:1px;background:#3a3a3a"></div>
<div style="position:absolute;left:0;top:446px;width:25px;height:1px;background:#3a3a3a"></div>
<div style="position:absolute;left:0;top:466px;width:25px;height:1px;background:#3a3a3a"></div>
<div style="position:absolute;left:0;top:486px;width:25px;height:1px;background:#3a3a3a"></div>
<div style="position:absolute;left:0;top:506px;width:25px;height:1px;background:#3a3a3a"></div>
<div style="position:absolute;left:0;top:526px;width:25px;height:1px;background:#3a3a3a"></div>
<div style="position:absolute;left:0;top:546px;width:25px;height:1px;background:#3a3a3a"></div>
<div style="position:absolute;left:0;top:566px;width:25px;height:1px;background:#3a3a3a"></div>
<div style="position:absolute;left:0;top:586px;width:25px;height:1px;background:#3a3a3a"></div>
<div style="position:absolute;left:0;top:606px;width:25px;height:1px;background:#3a3a3a"></div>
<div style="position:absolute;left:0;top:626px;width:25px;height:1px;background:#3a3a3a"></div>
<div style="position:absolute;left:0;top:646px;width:25px;height:1px;background:#3a3a3a"></div>
<div style="position:absolute;left:0;top:666px;width:25px;height:1px;background:#3a3a3a"></div>
<div style="position:absolute;left:0;top:686px;width:25px;height:1px;background:#3a3a3a"></div>
<div style="position:absolute;left:0;top:706px;width:25px;height:1px;background:#3a3a3a"></div>
<div style="position:absolute;left:23px;top:126px;width:2px;height:60px;background:#3b7657"></div>
</div>
<div style="position:absolute;left:25px;top:278px;width:1873px;height:700px;background:#fff;overflow:hidden">
<div style="position:absolute;left:635px;top:126px;width:847px;height:60px;background:#c6c6c6"></div>
<div style="position:absolute;left:635px;top:126px;width:88px;height:20px;background:#fff"></div>
<div class="hl" style="top:21px"></div>
<div class="hl" style="top:42px"></div>
<div class="hl" style="top:63px"></div>
<div class="hl" style="top:84px"></div>
<div class="hl" style="top:105px"></div>
<div class="hl" style="top:126px"></div>
<div class="hl" style="top:146px"></div>
<div class="hl" style="top:166px"></div>
<div class="hl" style="top:186px"></div>
<div class="hl" style="top:206px"></div>
<div class="hl" style="top:226px"></div>
<div class="hl" style="top:246px"></div>
<div class="hl" style="top:266px"></div>
<div class="hl" style="top:286px"></div>
<div class="hl" style="top:306px"></div>
<div class="hl" style="top:326px"></div>
<div class="hl" style="top:346px"></div>
<div class="hl" style="top:366px"></div>
<div class="hl" style="top:386px"></div>
<div class="hl" style="top:406px"></div>
<div class="hl" style="top:426px"></div>
<div class="hl" style="top:446px"></div>
<div class="hl" style="top:466px"></div>
<div class="hl" style="top:486px"></div>
<div class="hl" style="top:506px"></div>
<div class="hl" style="top:526px"></div>
<div class="hl" style="top:546px"></div>
<div class="hl" style="top:566px"></div>
<div class="hl" style="top:586px"></div>
<div class="hl" style="top:606px"></div>
<div class="hl" style="top:626px"></div>
<div class="hl" style="top:646px"></div>
<div class="hl" style="top:666px"></div>
<div class="hl" style="top:686px"></div>
<div class="hl" style="top:706px"></div>
<div class="vl" style="left:119px;top:0px;height:126px"></div>
<div class="vl" style="left:201px;top:0px;height:126px"></div>
<div class="vl" style="left:265px;top:0px;height:126px"></div>
<div class="vl" style="left:389px;top:0px;height:126px"></div>
<div class="vl" style="left:635px;top:0px;height:126px"></div>
<div class="vl" style="left:723px;top:0px;height:126px"></div>
<div class="vl" style="left:880px;top:0px;height:126px"></div>
<div class="vl" style="left:958px;top:0px;height:126px"></div>
<div class="vl" style="left:1078px;top:0px;height:126px"></div>
<div class="vl" style="left:1242px;top:0px;height:126px"></div>
<div class="vl" style="left:1354px;top:0px;height:126px"></div>
<div class="vl" style="left:1482px;top:0px;height:126px"></div>
<div class="vl" style="left:1546px;top:0px;height:126px"></div>
<div class="vl" style="left:1610px;top:0px;height:126px"></div>
<div class="vl" style="left:1674px;top:0px;height:126px"></div>
<div class="vl" style="left:1738px;top:0px;height:126px"></div>
<div class="vl" style="left:1802px;top:0px;height:126px"></div>
<div class="vl" style="left:1866px;top:0px;height:126px"></div>
<div class="vl" style="left:119px;top:126px;height:574px"></div>
<div class="vl" style="left:201px;top:126px;height:574px"></div>
<div class="vl" style="left:265px;top:126px;height:574px"></div>
<div class="vl" style="left:389px;top:126px;height:574px"></div>
<div class="vl" style="left:635px;top:126px;height:574px"></div>
<div class="vl" style="left:723px;top:126px;height:574px"></div>
<div class="vl" style="left:880px;top:126px;height:574px"></div>
<div class="vl" style="left:958px;top:126px;height:574px"></div>
<div class="vl" style="left:1078px;top:126px;height:574px"></div>
<div class="vl" style="left:1242px;top:126px;height:574px"></div>
<div class="vl" style="left:1354px;top:126px;height:574px"></div>
<div class="vl" style="left:1418px;top:126px;height:574px"></div>
<div class="vl" style="left:1546px;top:126px;height:574px"></div>
<div class="vl" style="left:1610px;top:126px;height:574px"></div>
<div class="vl" style="left:1674px;top:126px;height:574px"></div>
<div class="vl" style="left:1738px;top:126px;height:574px"></div>
<div class="vl" style="left:1802px;top:126px;height:574px"></div>
<div class="vl" style="left:1866px;top:126px;height:574px"></div>
<div class="c1 t" style="left:3px;top:0px;width:116px;">Maret-P1</div>
<div class="c1 d r" style="left:119px;top:0px;width:80px;">1</div>
<div class="c1 t" style="left:204px;top:0px;width:61px;">25098ARI7000000</div>
<div class="c1 t" style="left:268px;top:0px;width:121px;">Normal</div>
<div class="c1 d" style="left:392px;top:0px;width:243px;letter-spacing:0.1px">0508615499077000000000</div>
<div class="tri" style="left:389px;top:0px"></div>
<div class="c1 t" style="left:638px;top:0px;width:85px;">Pasal 21</div>
<div class="c1 d" style="left:726px;top:0px;width:154px;">21-100-01</div>
<div class="c1 d" style="left:883px;top:0px;width:75px;">1671052112020001</div>
<div class="tri" style="left:880px;top:0px"></div>
<div class="c1 u" style="left:961px;top:0px;width:117px;">MUHAMMAD RISKI PATJRI</div>
<div class="c1 d r" style="left:1078px;top:0px;width:162px;">5424558</div>
<div class="c1 d r" style="left:1242px;top:0px;width:110px;">13561</div>
<div class="c1 t" style="left:1357px;top:0px;width:400px;">Tanpa Fasilitas</div>
<div class="c1 t" style="left:3px;top:21px;width:116px;">Maret-P1</div>
<div class="c1 d r" style="left:119px;top:21px;width:80px;">1</div>
<div class="c1 t" style="left:204px;top:21px;width:61px;">25098ARI7000000</div>
<div class="c1 t" style="left:268px;top:21px;width:121px;">Normal</div>
<div class="c1 d" style="left:392px;top:21px;width:243px;letter-spacing:0.1px">0508615499077000000000</div>
<div class="tri" style="left:389px;top:21px"></div>
<div class="c1 t" style="left:638px;top:21px;width:85px;">Pasal 21</div>
<div class="c1 d" style="left:726px;top:21px;width:154px;">21-100-01</div>
<div class="c1 d" style="left:883px;top:21px;width:75px;">5307056304990002</div>
<div class="tri" style="left:880px;top:21px"></div>
<div class="c1 u" style="left:961px;top:21px;width:117px;">MELANIA APRIANI</div>
<div class="c1 d r" style="left:1078px;top:21px;width:162px;">4563632</div>
<div class="c1 d r" style="left:1242px;top:21px;width:110px;">0</div>
<div class="c1 t" style="left:1357px;top:21px;width:400px;">Tanpa Fasilitas</div>
<div class="c1 t" style="left:3px;top:42px;width:116px;">Maret-P1</div>
<div class="c1 d r" style="left:119px;top:42px;width:80px;">1</div>
<div class="c1 t" style="left:204px;top:42px;width:61px;">25098ARI7000000</div>
<div class="c1 t" style="left:268px;top:42px;width:121px;">Normal</div>
<div class="c1 d" style="left:392px;top:42px;width:243px;letter-spacing:0.1px">0508615499077000000000</div>
<div class="tri" style="left:389px;top:42px"></div>
<div class="c1 t" style="left:638px;top:42px;width:85px;">Pasal 21</div>
<div class="c1 d" style="left:726px;top:42px;width:154px;">21-100-01</div>
<div class="c1 d" style="left:883px;top:42px;width:75px;">1671071503000004</div>
<div class="tri" style="left:880px;top:42px"></div>
<div class="c1 u" style="left:961px;top:42px;width:117px;">MUHAMMAD ADITYA</div>
<div class="c1 d r" style="left:1078px;top:42px;width:162px;">4545681</div>
<div class="c1 d r" style="left:1242px;top:42px;width:110px;">0</div>
<div class="c1 t" style="left:1357px;top:42px;width:400px;">Tanpa Fasilitas</div>
<div class="c1 t" style="left:3px;top:63px;width:116px;">Maret-P1</div>
<div class="c1 d r" style="left:119px;top:63px;width:80px;">1</div>
<div class="c1 t" style="left:204px;top:63px;width:61px;">25098ARI7000000</div>
<div class="c1 t" style="left:268px;top:63px;width:121px;">Normal</div>
<div class="c1 d" style="left:392px;top:63px;width:243px;letter-spacing:0.1px">0508615499077000000000</div>
<div class="tri" style="left:389px;top:63px"></div>
<div class="c1 t" style="left:638px;top:63px;width:85px;">Pasal 21</div>
<div class="c1 d" style="left:726px;top:63px;width:154px;">21-100-01</div>
<div class="c1 d" style="left:883px;top:63px;width:75px;">1671020811000005</div>
<div class="tri" style="left:880px;top:63px"></div>
<div class="c1 u" style="left:961px;top:63px;width:117px;">MUHAMMAD ALIF</div>
<div class="c1 d r" style="left:1078px;top:63px;width:162px;">4545681</div>
<div class="c1 d r" style="left:1242px;top:63px;width:110px;">0</div>
<div class="c1 t" style="left:1357px;top:63px;width:400px;">Tanpa Fasilitas</div>
<div class="c1 t" style="left:3px;top:84px;width:116px;">Maret-P1</div>
<div class="c1 d r" style="left:119px;top:84px;width:80px;">1</div>
<div class="c1 t" style="left:204px;top:84px;width:61px;">25098ARI7000000</div>
<div class="c1 t" style="left:268px;top:84px;width:121px;">Normal</div>
<div class="c1 d" style="left:392px;top:84px;width:243px;letter-spacing:0.1px">0508615499077000000000</div>
<div class="tri" style="left:389px;top:84px"></div>
<div class="c1 t" style="left:638px;top:84px;width:85px;">Pasal 21</div>
<div class="c1 d" style="left:726px;top:84px;width:154px;">21-100-01</div>
<div class="c1 d" style="left:883px;top:84px;width:75px;">3671041810000005</div>
<div class="tri" style="left:880px;top:84px"></div>
<div class="c1 u" style="left:961px;top:84px;width:117px;">Hafid Fadilah</div>
<div class="c1 d r" style="left:1078px;top:84px;width:162px;">3440745</div>
<div class="c1 d r" style="left:1242px;top:84px;width:110px;">0</div>
<div class="c1 t" style="left:1357px;top:84px;width:400px;">Tanpa Fasilitas</div>
<div class="c1 t" style="left:3px;top:105px;width:116px;">Maret-P1</div>
<div class="c1 d r" style="left:119px;top:105px;width:80px;">1</div>
<div class="c1 t" style="left:204px;top:105px;width:61px;">25098ARI7000000</div>
<div class="c1 t" style="left:268px;top:105px;width:121px;">Normal</div>
<div class="c1 d" style="left:392px;top:105px;width:243px;letter-spacing:0.1px">0508615499077000000000</div>
<div class="tri" style="left:389px;top:105px"></div>
<div class="c1 t" style="left:638px;top:105px;width:85px;">Pasal 21</div>
<div class="c1 d" style="left:726px;top:105px;width:154px;">21-100-01</div>
<div class="c1 d" style="left:883px;top:105px;width:75px;">5101011706990001</div>
<div class="tri" style="left:880px;top:105px"></div>
<div class="c1 u" style="left:961px;top:105px;width:117px;">YOFAN VIRANDUS</div>
<div class="c1 d r" style="left:1078px;top:105px;width:162px;">2555166</div>
<div class="c1 d r" style="left:1242px;top:105px;width:110px;">0</div>
<div class="c1 t" style="left:1357px;top:105px;width:400px;">Tanpa Fasilitas</div>
<div class="c2 t" style="left:3px;top:126px;width:116px;letter-spacing:0.4px">April-P1</div>
<div class="c2 d r" style="left:119px;top:126px;width:80px;">1</div>
<div class="c2 t" style="left:204px;top:126px;width:61px;letter-spacing:0.2px">April 2025</div>
<div class="c2 t" style="left:392px;top:126px;width:243px;letter-spacing:0.5px">Disimpan</div>
<div class="c2 d" style="left:638px;top:126px;width:85px;">0508615499077000000000</div>
<div class="tri" style="left:635px;top:126px"></div>
<div class="c2 t" style="left:726px;top:126px;width:154px;">Pasal 21</div>
<div class="c2 d" style="left:883px;top:126px;width:75px;">21-100-01</div>
<div class="c2 d" style="left:961px;top:126px;width:117px;">1671033005010006</div>
<div class="tri" style="left:958px;top:126px"></div>
<div class="c2 u" style="left:1081px;top:126px;width:161px;">BAGAS ANGGARA SAPUTRA</div>
<div class="c2 d r" style="left:1242px;top:126px;width:110px;">4238150</div>
<div class="c2 d r" style="left:1354px;top:126px;width:62px;">0</div>
<div class="c2 t" style="left:1421px;top:126px;width:400px;letter-spacing:0.14px">Tanpa Fasilitas</div>
<div class="c2 t" style="left:3px;top:146px;width:116px;letter-spacing:0.4px">April-P1</div>
<div class="c2 d r" style="left:119px;top:146px;width:80px;">1</div>
<div class="c2 t" style="left:204px;top:146px;width:61px;letter-spacing:0.2px">April 2025</div>
<div class="c2 t" style="left:392px;top:146px;width:243px;letter-spacing:0.5px">Disimpan</div>
<div class="c2 d" style="left:638px;top:146px;width:85px;">0508615499077000000000</div>
<div class="tri" style="left:635px;top:146px"></div>
<div class="c2 t" style="left:726px;top:146px;width:154px;">Pasal 21</div>
<div class="c2 d" style="left:883px;top:146px;width:75px;">21-100-01</div>
<div class="c2 d" style="left:961px;top:146px;width:117px;">5108051004930002</div>
<div class="tri" style="left:958px;top:146px"></div>
<div class="c2 u" style="left:1081px;top:146px;width:161px;">MUH SOFIAN MAWARDI</div>
<div class="c2 d r" style="left:1242px;top:146px;width:110px;">4129089</div>
<div class="c2 d r" style="left:1354px;top:146px;width:62px;">0</div>
<div class="c2 t" style="left:1421px;top:146px;width:400px;letter-spacing:0.14px">Tanpa Fasilitas</div>
<div class="c2 t" style="left:3px;top:166px;width:116px;letter-spacing:0.4px">April-P1</div>
<div class="c2 d r" style="left:119px;top:166px;width:80px;">1</div>
<div class="c2 t" style="left:204px;top:166px;width:61px;letter-spacing:0.2px">April 2025</div>
<div class="c2 t" style="left:392px;top:166px;width:243px;letter-spacing:0.5px">Disimpan</div>
<div class="c2 d" style="left:638px;top:166px;width:85px;">0508615499077000000000</div>
<div class="tri" style="left:635px;top:166px"></div>
<div class="c2 t" style="left:726px;top:166px;width:154px;">Pasal 21</div>
<div class="c2 d" style="left:883px;top:166px;width:75px;">21-100-01</div>
<div class="c2 d" style="left:961px;top:166px;width:117px;">1671112310800002</div>
<div class="tri" style="left:958px;top:166px"></div>
<div class="c2 u" style="left:1081px;top:166px;width:161px;">R.M ROCKY ARIANSYAH</div>
<div class="c2 d r" style="left:1242px;top:166px;width:110px;">6619400</div>
<div class="c2 d r" style="left:1354px;top:166px;width:62px;">16549</div>
<div class="c2 t" style="left:1421px;top:166px;width:400px;letter-spacing:0.14px">Tanpa Fasilitas</div>
<div class="c2 t" style="left:3px;top:186px;width:116px;letter-spacing:0.4px">April-P1</div>
<div class="c2 d r" style="left:119px;top:186px;width:80px;">1</div>
<div class="c2 t" style="left:204px;top:186px;width:61px;letter-spacing:0.2px">April 2025</div>
<div class="c2 t" style="left:392px;top:186px;width:243px;letter-spacing:0.5px">Disimpan</div>
<div class="c2 d" style="left:638px;top:186px;width:85px;">0508615499077000000000</div>
<div class="tri" style="left:635px;top:186px"></div>
<div class="c2 t" style="left:726px;top:186px;width:154px;">Pasal 21</div>
<div class="c2 d" style="left:883px;top:186px;width:75px;">21-100-01</div>
<div class="c2 d" style="left:961px;top:186px;width:117px;">3205052207000001</div>
<div class="tri" style="left:958px;top:186px"></div>
<div class="c2 u" style="left:1081px;top:186px;width:161px;">SAHLAN MUBAROK</div>
<div class="c2 d r" style="left:1242px;top:186px;width:110px;">2734716</div>
<div class="c2 d r" style="left:1354px;top:186px;width:62px;">0</div>
<div class="c2 t" style="left:1421px;top:186px;width:400px;letter-spacing:0.14px">Tanpa Fasilitas</div>
<div class="c2 t" style="left:3px;top:206px;width:116px;letter-spacing:0.4px">April-P1</div>
<div class="c2 d r" style="left:119px;top:206px;width:80px;">1</div>
<div class="c2 t" style="left:204px;top:206px;width:61px;letter-spacing:0.2px">April 2025</div>
<div class="c2 t" style="left:392px;top:206px;width:243px;letter-spacing:0.5px">Disimpan</div>
<div class="c2 d" style="left:638px;top:206px;width:85px;">0508615499077000000000</div>
<div class="tri" style="left:635px;top:206px"></div>
<div class="c2 t" style="left:726px;top:206px;width:154px;">Pasal 21</div>
<div class="c2 d" style="left:883px;top:206px;width:75px;">21-100-01</div>
<div class="c2 d" style="left:961px;top:206px;width:117px;">3217120406980002</div>
<div class="tri" style="left:958px;top:206px"></div>
<div class="c2 u" style="left:1081px;top:206px;width:161px;">KURNIAWAN</div>
<div class="c2 d r" style="left:1242px;top:206px;width:110px;">1652981</div>
<div class="c2 d r" style="left:1354px;top:206px;width:62px;">0</div>
<div class="c2 t" style="left:1421px;top:206px;width:400px;letter-spacing:0.14px">Tanpa Fasilitas</div>
<div class="c2 t" style="left:3px;top:226px;width:116px;letter-spacing:0.4px">April-P1</div>
<div class="c2 d r" style="left:119px;top:226px;width:80px;">1</div>
<div class="c2 t" style="left:204px;top:226px;width:61px;letter-spacing:0.2px">April 2025</div>
<div class="c2 t" style="left:392px;top:226px;width:243px;letter-spacing:0.5px">Disimpan</div>
<div class="c2 d" style="left:638px;top:226px;width:85px;">0508615499077000000000</div>
<div class="tri" style="left:635px;top:226px"></div>
<div class="c2 t" style="left:726px;top:226px;width:154px;">Pasal 21</div>
<div class="c2 d" style="left:883px;top:226px;width:75px;">21-100-01</div>
<div class="c2 d" style="left:961px;top:226px;width:117px;">1671041505990007</div>
<div class="tri" style="left:958px;top:226px"></div>
<div class="c2 u" style="left:1081px;top:226px;width:161px;">RIZKY ALFINDO</div>
<div class="c2 d r" style="left:1242px;top:226px;width:110px;">4938150</div>
<div class="c2 d r" style="left:1354px;top:226px;width:62px;">0</div>
<div class="c2 t" style="left:1421px;top:226px;width:400px;letter-spacing:0.14px">Tanpa Fasilitas</div>
<div class="c2 t" style="left:3px;top:246px;width:116px;letter-spacing:0.4px">April-P1</div>
<div class="c2 d r" style="left:119px;top:246px;width:80px;">1</div>
<div class="c2 t" style="left:204px;top:246px;width:61px;letter-spacing:0.2px">April 2025</div>
<div class="c2 t" style="left:392px;top:246px;width:243px;letter-spacing:0.5px">Disimpan</div>
<div class="c2 d" style="left:638px;top:246px;width:85px;">0508615499077000000000</div>
<div class="tri" style="left:635px;top:246px"></div>
<div class="c2 t" style="left:726px;top:246px;width:154px;">Pasal 21</div>
<div class="c2 d" style="left:883px;top:246px;width:75px;">21-100-01</div>
<div class="c2 d" style="left:961px;top:246px;width:117px;">3603010507810004</div>
<div class="tri" style="left:958px;top:246px"></div>
<div class="c2 u" style="left:1081px;top:246px;width:161px;">SARIP HIDAYAT</div>
<div class="c2 d r" style="left:1242px;top:246px;width:110px;">3459376</div>
<div class="c2 d r" style="left:1354px;top:246px;width:62px;">0</div>
<div class="c2 t" style="left:1421px;top:246px;width:400px;letter-spacing:0.14px">Tanpa Fasilitas</div>
<div class="c2 t" style="left:3px;top:266px;width:116px;letter-spacing:0.4px">April-P1</div>
<div class="c2 d r" style="left:119px;top:266px;width:80px;">1</div>
<div class="c2 t" style="left:204px;top:266px;width:61px;letter-spacing:0.2px">April 2025</div>
<div class="c2 t" style="left:392px;top:266px;width:243px;letter-spacing:0.5px">Disimpan</div>
<div class="c2 d" style="left:638px;top:266px;width:85px;">0508615499077000000000</div>
<div class="tri" style="left:635px;top:266px"></div>
<div class="c2 t" style="left:726px;top:266px;width:154px;">Pasal 21</div>
<div class="c2 d" style="left:883px;top:266px;width:75px;">21-100-01</div>
<div class="c2 d" style="left:961px;top:266px;width:117px;">3671041810000005</div>
<div class="tri" style="left:958px;top:266px"></div>
<div class="c2 u" style="left:1081px;top:266px;width:161px;letter-spacing:0.5px">Hafid Fadilah</div>
<div class="c2 d r" style="left:1242px;top:266px;width:110px;">4612165</div>
<div class="c2 d r" style="left:1354px;top:266px;width:62px;">0</div>
<div class="c2 t" style="left:1421px;top:266px;width:400px;letter-spacing:0.14px">Tanpa Fasilitas</div>
<div class="c2 t" style="left:3px;top:286px;width:116px;letter-spacing:0.4px">April-P1</div>
<div class="c2 d r" style="left:119px;top:286px;width:80px;">1</div>
<div class="c2 t" style="left:204px;top:286px;width:61px;letter-spacing:0.2px">April 2025</div>
<div class="c2 t" style="left:392px;top:286px;width:243px;letter-spacing:0.5px">Disimpan</div>
<div class="c2 d" style="left:638px;top:286px;width:85px;">0508615499077000000000</div>
<div class="tri" style="left:635px;top:286px"></div>
<div class="c2 t" style="left:726px;top:286px;width:154px;">Pasal 21</div>
<div class="c2 d" style="left:883px;top:286px;width:75px;">21-100-01</div>
<div class="c2 d" style="left:961px;top:286px;width:117px;">3205042104810004</div>
<div class="tri" style="left:958px;top:286px"></div>
<div class="c2 u" style="left:1081px;top:286px;width:161px;">ANGGIN DONY NURAPRIL YUSUF</div>
<div class="c2 d r" style="left:1242px;top:286px;width:110px;">1813650</div>
<div class="c2 d r" style="left:1354px;top:286px;width:62px;">0</div>
<div class="c2 t" style="left:1421px;top:286px;width:400px;letter-spacing:0.14px">Tanpa Fasilitas</div>
<div class="c2 t" style="left:3px;top:306px;width:116px;letter-spacing:0.4px">April-P1</div>
<div class="c2 d r" style="left:119px;top:306px;width:80px;">1</div>
<div class="c2 t" style="left:204px;top:306px;width:61px;letter-spacing:0.2px">April 2025</div>
<div class="c2 t" style="left:392px;top:306px;width:243px;letter-spacing:0.5px">Disimpan</div>
<div class="c2 d" style="left:638px;top:306px;width:85px;">0508615499077000000000</div>
<div class="tri" style="left:635px;top:306px"></div>
<div class="c2 t" style="left:726px;top:306px;width:154px;">Pasal 21</div>
<div class="c2 d" style="left:883px;top:306px;width:75px;">21-100-01</div>
<div class="c2 d" style="left:961px;top:306px;width:117px;">1671062504830013</div>
<div class="tri" style="left:958px;top:306px"></div>
<div class="c2 u" style="left:1081px;top:306px;width:161px;">RADEN HARRY</div>
<div class="c2 d r" style="left:1242px;top:306px;width:110px;">6739400</div>
<div class="c2 d r" style="left:1354px;top:306px;width:62px;">16849</div>
<div class="c2 t" style="left:1421px;top:306px;width:400px;letter-spacing:0.14px">Tanpa Fasilitas</div>
<div class="c2 t" style="left:3px;top:326px;width:116px;letter-spacing:0.4px">April-P1</div>
<div class="c2 d r" style="left:119px;top:326px;width:80px;">1</div>
<div class="c2 t" style="left:204px;top:326px;width:61px;letter-spacing:0.2px">April 2025</div>
<div class="c2 t" style="left:392px;top:326px;width:243px;letter-spacing:0.5px">Disimpan</div>
<div class="c2 d" style="left:638px;top:326px;width:85px;">0508615499077000000000</div>
<div class="tri" style="left:635px;top:326px"></div>
<div class="c2 t" style="left:726px;top:326px;width:154px;">Pasal 21</div>
<div class="c2 d" style="left:883px;top:326px;width:75px;">21-100-01</div>
<div class="c2 d" style="left:961px;top:326px;width:117px;">3204271702930002</div>
<div class="tri" style="left:958px;top:326px"></div>
<div class="c2 u" style="left:1081px;top:326px;width:161px;">HERU RUBIANTO</div>
<div class="c2 d r" style="left:1242px;top:326px;width:110px;">3928581</div>
<div class="c2 d r" style="left:1354px;top:326px;width:62px;">0</div>
<div class="c2 t" style="left:1421px;top:326px;width:400px;letter-spacing:0.14px">Tanpa Fasilitas</div>
<div class="c2 t" style="left:3px;top:346px;width:116px;letter-spacing:0.4px">April-P1</div>
<div class="c2 d r" style="left:119px;top:346px;width:80px;">1</div>
<div class="c2 t" style="left:204px;top:346px;width:61px;letter-spacing:0.2px">April 2025</div>
<div class="c2 t" style="left:392px;top:346px;width:243px;letter-spacing:0.5px">Disimpan</div>
<div class="c2 d" style="left:638px;top:346px;width:85px;">0508615499077000000000</div>
<div class="tri" style="left:635px;top:346px"></div>
<div class="c2 t" style="left:726px;top:346px;width:154px;">Pasal 21</div>
<div class="c2 d" style="left:883px;top:346px;width:75px;">21-100-01</div>
<div class="c2 d" style="left:961px;top:346px;width:117px;">3201060310990001</div>
<div class="tri" style="left:958px;top:346px"></div>
<div class="c2 u" style="left:1081px;top:346px;width:161px;">DERRY WIJAYA</div>
<div class="c2 d r" style="left:1242px;top:346px;width:110px;">2864694</div>
<div class="c2 d r" style="left:1354px;top:346px;width:62px;">0</div>
<div class="c2 t" style="left:1421px;top:346px;width:400px;letter-spacing:0.14px">Tanpa Fasilitas</div>
<div class="c2 t" style="left:3px;top:366px;width:116px;letter-spacing:0.4px">April-P1</div>
<div class="c2 d r" style="left:119px;top:366px;width:80px;">1</div>
<div class="c2 t" style="left:204px;top:366px;width:61px;letter-spacing:0.2px">April 2025</div>
<div class="c2 t" style="left:392px;top:366px;width:243px;letter-spacing:0.5px">Disimpan</div>
<div class="c2 d" style="left:638px;top:366px;width:85px;">0508615499077000000000</div>
<div class="tri" style="left:635px;top:366px"></div>
<div class="c2 t" style="left:726px;top:366px;width:154px;">Pasal 21</div>
<div class="c2 d" style="left:883px;top:366px;width:75px;">21-100-01</div>
<div class="c2 d" style="left:961px;top:366px;width:117px;">3216062904860003</div>
<div class="tri" style="left:958px;top:366px"></div>
<div class="c2 u" style="left:1081px;top:366px;width:161px;">JATI SINGGIH TRIANTOKO</div>
<div class="c2 d r" style="left:1242px;top:366px;width:110px;">6161298</div>
<div class="c2 d r" style="left:1354px;top:366px;width:62px;">0</div>
<div class="c2 t" style="left:1421px;top:366px;width:400px;letter-spacing:0.14px">Tanpa Fasilitas</div>
<div class="c2 t" style="left:3px;top:386px;width:116px;letter-spacing:0.4px">April-P1</div>
<div class="c2 d r" style="left:119px;top:386px;width:80px;">1</div>
<div class="c2 t" style="left:204px;top:386px;width:61px;letter-spacing:0.2px">April 2025</div>
<div class="c2 t" style="left:392px;top:386px;width:243px;letter-spacing:0.5px">Disimpan</div>
<div class="c2 d" style="left:638px;top:386px;width:85px;">0508615499077000000000</div>
<div class="tri" style="left:635px;top:386px"></div>
<div class="c2 t" style="left:726px;top:386px;width:154px;">Pasal 21</div>
<div class="c2 d" style="left:883px;top:386px;width:75px;">21-100-01</div>
<div class="c2 d" style="left:961px;top:386px;width:117px;">1671052112020001</div>
<div class="tri" style="left:958px;top:386px"></div>
<div class="c2 u" style="left:1081px;top:386px;width:161px;">MUHAMMAD RISKI PATJRI</div>
<div class="c2 d r" style="left:1242px;top:386px;width:110px;">4669815</div>
<div class="c2 d r" style="left:1354px;top:386px;width:62px;">0</div>
<div class="c2 t" style="left:1421px;top:386px;width:400px;letter-spacing:0.14px">Tanpa Fasilitas</div>
<div class="c2 t" style="left:3px;top:406px;width:116px;letter-spacing:0.4px">April-P1</div>
<div class="c2 d r" style="left:119px;top:406px;width:80px;">1</div>
<div class="c2 t" style="left:204px;top:406px;width:61px;letter-spacing:0.2px">April 2025</div>
<div class="c2 t" style="left:392px;top:406px;width:243px;letter-spacing:0.5px">Disimpan</div>
<div class="c2 d" style="left:638px;top:406px;width:85px;">0508615499077000000000</div>
<div class="tri" style="left:635px;top:406px"></div>
<div class="c2 t" style="left:726px;top:406px;width:154px;">Pasal 21</div>
<div class="c2 d" style="left:883px;top:406px;width:75px;">21-100-01</div>
<div class="c2 d" style="left:961px;top:406px;width:117px;">1607100603000006</div>
<div class="tri" style="left:958px;top:406px"></div>
<div class="c2 u" style="left:1081px;top:406px;width:161px;">CHAERIL SAPUTRA</div>
<div class="c2 d r" style="left:1242px;top:406px;width:110px;">2188615</div>
<div class="c2 d r" style="left:1354px;top:406px;width:62px;">0</div>
<div class="c2 t" style="left:1421px;top:406px;width:400px;letter-spacing:0.14px">Tanpa Fasilitas</div>
<div class="c2 t" style="left:3px;top:426px;width:116px;letter-spacing:0.4px">April-P1</div>
<div class="c2 d r" style="left:119px;top:426px;width:80px;">1</div>
<div class="c2 t" style="left:204px;top:426px;width:61px;letter-spacing:0.2px">April 2025</div>
<div class="c2 t" style="left:392px;top:426px;width:243px;letter-spacing:0.5px">Disimpan</div>
<div class="c2 d" style="left:638px;top:426px;width:85px;">0508615499077000000000</div>
<div class="tri" style="left:635px;top:426px"></div>
<div class="c2 t" style="left:726px;top:426px;width:154px;">Pasal 21</div>
<div class="c2 d" style="left:883px;top:426px;width:75px;">21-100-01</div>
<div class="c2 d" style="left:961px;top:426px;width:117px;">3201102805850006</div>
<div class="tri" style="left:958px;top:426px"></div>
<div class="c2 u" style="left:1081px;top:426px;width:161px;">DIAN CANDRA</div>
<div class="c2 d r" style="left:1242px;top:426px;width:110px;">6229685</div>
<div class="c2 d r" style="left:1354px;top:426px;width:62px;">15574</div>
<div class="c2 t" style="left:1421px;top:426px;width:400px;letter-spacing:0.14px">Tanpa Fasilitas</div>
<div class="c2 t" style="left:3px;top:446px;width:116px;letter-spacing:0.4px">April-P1</div>
<div class="c2 d r" style="left:119px;top:446px;width:80px;">1</div>
<div class="c2 t" style="left:204px;top:446px;width:61px;letter-spacing:0.2px">April 2025</div>
<div class="c2 t" style="left:392px;top:446px;width:243px;letter-spacing:0.5px">Disimpan</div>
<div class="c2 d" style="left:638px;top:446px;width:85px;">0508615499077000000000</div>
<div class="tri" style="left:635px;top:446px"></div>
<div class="c2 t" style="left:726px;top:446px;width:154px;">Pasal 21</div>
<div class="c2 d" style="left:883px;top:446px;width:75px;">21-100-01</div>
<div class="c2 d" style="left:961px;top:446px;width:117px;">1606021703900001</div>
<div class="tri" style="left:958px;top:446px"></div>
<div class="c2 u" style="left:1081px;top:446px;width:161px;">EZUFATRIN</div>
<div class="c2 d r" style="left:1242px;top:446px;width:110px;">5594400</div>
<div class="c2 d r" style="left:1354px;top:446px;width:62px;">0</div>
<div class="c2 t" style="left:1421px;top:446px;width:400px;letter-spacing:0.14px">Tanpa Fasilitas</div>
<div class="c2 t" style="left:3px;top:466px;width:116px;letter-spacing:0.4px">April-P1</div>
<div class="c2 d r" style="left:119px;top:466px;width:80px;">1</div>
<div class="c2 t" style="left:204px;top:466px;width:61px;letter-spacing:0.2px">April 2025</div>
<div class="c2 t" style="left:392px;top:466px;width:243px;letter-spacing:0.5px">Disimpan</div>
<div class="c2 d" style="left:638px;top:466px;width:85px;">0508615499077000000000</div>
<div class="tri" style="left:635px;top:466px"></div>
<div class="c2 t" style="left:726px;top:466px;width:154px;">Pasal 21</div>
<div class="c2 d" style="left:883px;top:466px;width:75px;">21-100-01</div>
<div class="c2 d" style="left:961px;top:466px;width:117px;">1306092202010001</div>
<div class="tri" style="left:958px;top:466px"></div>
<div class="c2 u" style="left:1081px;top:466px;width:161px;">FEBRI EKA SAPUTRA</div>
<div class="c2 d r" style="left:1242px;top:466px;width:110px;">3154827</div>
<div class="c2 d r" style="left:1354px;top:466px;width:62px;">0</div>
<div class="c2 t" style="left:1421px;top:466px;width:400px;letter-spacing:0.14px">Tanpa Fasilitas</div>
<div class="c2 t" style="left:3px;top:486px;width:116px;letter-spacing:0.4px">April-P1</div>
<div class="c2 d r" style="left:119px;top:486px;width:80px;">1</div>
<div class="c2 t" style="left:204px;top:486px;width:61px;letter-spacing:0.2px">April 2025</div>
<div class="c2 t" style="left:392px;top:486px;width:243px;letter-spacing:0.5px">Disimpan</div>
<div class="c2 d" style="left:638px;top:486px;width:85px;">0508615499077000000000</div>
<div class="tri" style="left:635px;top:486px"></div>
<div class="c2 t" style="left:726px;top:486px;width:154px;">Pasal 21</div>
<div class="c2 d" style="left:883px;top:486px;width:75px;">21-100-01</div>
<div class="c2 d" style="left:961px;top:486px;width:117px;">3216154401930002</div>
<div class="tri" style="left:958px;top:486px"></div>
<div class="c2 u" style="left:1081px;top:486px;width:161px;">ITA YULIANTI</div>
<div class="c2 d r" style="left:1242px;top:486px;width:110px;">2399227</div>
<div class="c2 d r" style="left:1354px;top:486px;width:62px;">0</div>
<div class="c2 t" style="left:1421px;top:486px;width:400px;letter-spacing:0.14px">Tanpa Fasilitas</div>
<div class="c2 t" style="left:3px;top:506px;width:116px;letter-spacing:0.4px">April-P1</div>
<div class="c2 d r" style="left:119px;top:506px;width:80px;">1</div>
<div class="c2 t" style="left:204px;top:506px;width:61px;letter-spacing:0.2px">April 2025</div>
<div class="c2 t" style="left:392px;top:506px;width:243px;letter-spacing:0.5px">Disimpan</div>
<div class="c2 d" style="left:638px;top:506px;width:85px;">0508615499077000000000</div>
<div class="tri" style="left:635px;top:506px"></div>
<div class="c2 t" style="left:726px;top:506px;width:154px;">Pasal 21</div>
<div class="c2 d" style="left:883px;top:506px;width:75px;">21-100-01</div>
<div class="c2 d" style="left:961px;top:506px;width:117px;">1671040912030005</div>
<div class="tri" style="left:958px;top:506px"></div>
<div class="c2 u" style="left:1081px;top:506px;width:161px;letter-spacing:0.5px">Yunan alpayed</div>
<div class="c2 d r" style="left:1242px;top:506px;width:110px;">5243150</div>
<div class="c2 d r" style="left:1354px;top:506px;width:62px;">0</div>
<div class="c2 t" style="left:1421px;top:506px;width:400px;letter-spacing:0.14px">Tanpa Fasilitas</div>
<div class="c2 t" style="left:3px;top:526px;width:116px;letter-spacing:0.4px">April-P1</div>
<div class="c2 d r" style="left:119px;top:526px;width:80px;">1</div>
<div class="c2 t" style="left:204px;top:526px;width:61px;letter-spacing:0.2px">April 2025</div>
<div class="c2 t" style="left:392px;top:526px;width:243px;letter-spacing:0.5px">Disimpan</div>
<div class="c2 d" style="left:638px;top:526px;width:85px;">0508615499077000000000</div>
<div class="tri" style="left:635px;top:526px"></div>
<div class="c2 t" style="left:726px;top:526px;width:154px;">Pasal 21</div>
<div class="c2 d" style="left:883px;top:526px;width:75px;">21-100-01</div>
<div class="c2 d" style="left:961px;top:526px;width:117px;">3174022805830002</div>
<div class="tri" style="left:958px;top:526px"></div>
<div class="c2 u" style="left:1081px;top:526px;width:161px;">SONGKO BUDI PRASETYO</div>
<div class="c2 d r" style="left:1242px;top:526px;width:110px;">5726143</div>
<div class="c2 d r" style="left:1354px;top:526px;width:62px;">0</div>
<div class="c2 t" style="left:1421px;top:526px;width:400px;letter-spacing:0.14px">Tanpa Fasilitas</div>
<div class="c2 t" style="left:3px;top:546px;width:116px;letter-spacing:0.4px">April-P1</div>
<div class="c2 d r" style="left:119px;top:546px;width:80px;">1</div>
<div class="c2 t" style="left:204px;top:546px;width:61px;letter-spacing:0.2px">April 2025</div>
<div class="c2 t" style="left:392px;top:546px;width:243px;letter-spacing:0.5px">Disimpan</div>
<div class="c2 d" style="left:638px;top:546px;width:85px;">0508615499077000000000</div>
<div class="tri" style="left:635px;top:546px"></div>
<div class="c2 t" style="left:726px;top:546px;width:154px;">Pasal 21</div>
<div class="c2 d" style="left:883px;top:546px;width:75px;">21-100-01</div>
<div class="c2 d" style="left:961px;top:546px;width:117px;">3211150402940011</div>
<div class="tri" style="left:958px;top:546px"></div>
<div class="c2 u" style="left:1081px;top:546px;width:161px;">DANDUNG DIMYATI</div>
<div class="c2 d r" style="left:1242px;top:546px;width:110px;">4686524</div>
<div class="c2 d r" style="left:1354px;top:546px;width:62px;">0</div>
<div class="c2 t" style="left:1421px;top:546px;width:400px;letter-spacing:0.14px">Tanpa Fasilitas</div>
<div class="c2 t" style="left:3px;top:566px;width:116px;letter-spacing:0.4px">April-P1</div>
<div class="c2 d r" style="left:119px;top:566px;width:80px;">1</div>
<div class="c2 t" style="left:204px;top:566px;width:61px;letter-spacing:0.2px">April 2025</div>
<div class="c2 t" style="left:392px;top:566px;width:243px;letter-spacing:0.5px">Disimpan</div>
<div class="c2 d" style="left:638px;top:566px;width:85px;">0508615499077000000000</div>
<div class="tri" style="left:635px;top:566px"></div>
<div class="c2 t" style="left:726px;top:566px;width:154px;">Pasal 21</div>
<div class="c2 d" style="left:883px;top:566px;width:75px;">21-100-01</div>
<div class="c2 d" style="left:961px;top:566px;width:117px;">3172025904930003</div>
<div class="tri" style="left:958px;top:566px"></div>
<div class="c2 u" style="left:1081px;top:566px;width:161px;">GITA APRIYANTI</div>
<div class="c2 d r" style="left:1242px;top:566px;width:110px;">3808730</div>
<div class="c2 d r" style="left:1354px;top:566px;width:62px;">0</div>
<div class="c2 t" style="left:1421px;top:566px;width:400px;letter-spacing:0.14px">Tanpa Fasilitas</div>
<div class="c2 t" style="left:3px;top:586px;width:116px;letter-spacing:0.4px">April-P1</div>
<div class="c2 d r" style="left:119px;top:586px;width:80px;">1</div>
<div class="c2 t" style="left:204px;top:586px;width:61px;letter-spacing:0.2px">April 2025</div>
<div class="c2 t" style="left:392px;top:586px;width:243px;letter-spacing:0.5px">Disimpan</div>
<div class="c2 d" style="left:638px;top:586px;width:85px;">0508615499077000000000</div>
<div class="tri" style="left:635px;top:586px"></div>
<div class="c2 t" style="left:726px;top:586px;width:154px;">Pasal 21</div>
<div class="c2 d" style="left:883px;top:586px;width:75px;">21-100-01</div>
<div class="c2 d" style="left:961px;top:586px;width:117px;">3275012910960011</div>
<div class="tri" style="left:958px;top:586px"></div>
<div class="c2 u" style="left:1081px;top:586px;width:161px;">ARIS DWIYANTO</div>
<div class="c2 d r" style="left:1242px;top:586px;width:110px;">4036360</div>
<div class="c2 d r" style="left:1354px;top:586px;width:62px;">0</div>
<div class="c2 t" style="left:1421px;top:586px;width:400px;letter-spacing:0.14px">Tanpa Fasilitas</div>
<div class="c2 t" style="left:3px;top:606px;width:116px;letter-spacing:0.4px">April-P1</div>
<div class="c2 d r" style="left:119px;top:606px;width:80px;">1</div>
<div class="c2 t" style="left:204px;top:606px;width:61px;letter-spacing:0.2px">April 2025</div>
<div class="c2 t" style="left:392px;top:606px;width:243px;letter-spacing:0.5px">Disimpan</div>
<div class="c2 d" style="left:638px;top:606px;width:85px;">0508615499077000000000</div>
<div class="tri" style="left:635px;top:606px"></div>
<div class="c2 t" style="left:726px;top:606px;width:154px;">Pasal 21</div>
<div class="c2 d" style="left:883px;top:606px;width:75px;">21-100-01</div>
<div class="c2 d" style="left:961px;top:606px;width:117px;">1671072605030004</div>
<div class="tri" style="left:958px;top:606px"></div>
<div class="c2 u" style="left:1081px;top:606px;width:161px;">MUHAMMAD REZA SAPUTRA</div>
<div class="c2 d r" style="left:1242px;top:606px;width:110px;">5073150</div>
<div class="c2 d r" style="left:1354px;top:606px;width:62px;">0</div>
<div class="c2 t" style="left:1421px;top:606px;width:400px;letter-spacing:0.14px">Tanpa Fasilitas</div>
<div class="c2 t" style="left:3px;top:626px;width:116px;letter-spacing:0.4px">April-P1</div>
<div class="c2 d r" style="left:119px;top:626px;width:80px;">1</div>
<div class="c2 t" style="left:204px;top:626px;width:61px;letter-spacing:0.2px">April 2025</div>
<div class="c2 t" style="left:392px;top:626px;width:243px;letter-spacing:0.5px">Disimpan</div>
<div class="c2 d" style="left:638px;top:626px;width:85px;">0508615499077000000000</div>
<div class="tri" style="left:635px;top:626px"></div>
<div class="c2 t" style="left:726px;top:626px;width:154px;">Pasal 21</div>
<div class="c2 d" style="left:883px;top:626px;width:75px;">21-100-01</div>
<div class="c2 d" style="left:961px;top:626px;width:117px;">1610050609020002</div>
<div class="tri" style="left:958px;top:626px"></div>
<div class="c2 u" style="left:1081px;top:626px;width:161px;">MUHAMMAD SATRIA PRATAMA</div>
<div class="c2 d r" style="left:1242px;top:626px;width:110px;">4394815</div>
<div class="c2 d r" style="left:1354px;top:626px;width:62px;">0</div>
<div class="c2 t" style="left:1421px;top:626px;width:400px;letter-spacing:0.14px">Tanpa Fasilitas</div>
<div class="c2 t" style="left:3px;top:646px;width:116px;letter-spacing:0.4px">April-P1</div>
<div class="c2 d r" style="left:119px;top:646px;width:80px;">1</div>
<div class="c2 t" style="left:204px;top:646px;width:61px;letter-spacing:0.2px">April 2025</div>
<div class="c2 t" style="left:392px;top:646px;width:243px;letter-spacing:0.5px">Disimpan</div>
<div class="c2 d" style="left:638px;top:646px;width:85px;">0508615499077000000000</div>
<div class="tri" style="left:635px;top:646px"></div>
<div class="c2 t" style="left:726px;top:646px;width:154px;">Pasal 21</div>
<div class="c2 d" style="left:883px;top:646px;width:75px;">21-100-01</div>
<div class="c2 d" style="left:961px;top:646px;width:117px;">3212266008000002</div>
<div class="tri" style="left:958px;top:646px"></div>
<div class="c2 u" style="left:1081px;top:646px;width:161px;">BELA AMELIA</div>
<div class="c2 d r" style="left:1242px;top:646px;width:110px;">2399227</div>
<div class="c2 d r" style="left:1354px;top:646px;width:62px;">0</div>
<div class="c2 t" style="left:1421px;top:646px;width:400px;letter-spacing:0.14px">Tanpa Fasilitas</div>
<div class="c2 t" style="left:3px;top:666px;width:116px;letter-spacing:0.4px">April-P1</div>
<div class="c2 d r" style="left:119px;top:666px;width:80px;">1</div>
<div class="c2 t" style="left:204px;top:666px;width:61px;letter-spacing:0.2px">April 2025</div>
<div class="c2 t" style="left:392px;top:666px;width:243px;letter-spacing:0.5px">Disimpan</div>
<div class="c2 d" style="left:638px;top:666px;width:85px;">0508615499077000000000</div>
<div class="tri" style="left:635px;top:666px"></div>
<div class="c2 t" style="left:726px;top:666px;width:154px;">Pasal 21</div>
<div class="c2 d" style="left:883px;top:666px;width:75px;">21-100-01</div>
<div class="c2 d" style="left:961px;top:666px;width:117px;">1871060602960007</div>
<div class="tri" style="left:958px;top:666px"></div>
<div class="c2 u" style="left:1081px;top:666px;width:161px;">IQBAL FAJAR RAMADHAN</div>
<div class="c2 d r" style="left:1242px;top:666px;width:110px;">3458466</div>
<div class="c2 d r" style="left:1354px;top:666px;width:62px;">0</div>
<div class="c2 t" style="left:1421px;top:666px;width:400px;letter-spacing:0.14px">Tanpa Fasilitas</div>
<div class="c2 t" style="left:3px;top:686px;width:116px;letter-spacing:0.4px">April-P1</div>
<div class="c2 d r" style="left:119px;top:686px;width:80px;">1</div>
<div class="c2 t" style="left:204px;top:686px;width:61px;letter-spacing:0.2px">April 2025</div>
<div class="c2 t" style="left:392px;top:686px;width:243px;letter-spacing:0.5px">Disimpan</div>
<div class="c2 d" style="left:638px;top:686px;width:85px;">0508615499077000000000</div>
<div class="tri" style="left:635px;top:686px"></div>
<div class="c2 t" style="left:726px;top:686px;width:154px;">Pasal 21</div>
<div class="c2 d" style="left:883px;top:686px;width:75px;">21-100-01</div>
<div class="c2 d" style="left:961px;top:686px;width:117px;">3215130712970001</div>
<div class="tri" style="left:958px;top:686px"></div>
<div class="c2 u" style="left:1081px;top:686px;width:161px;">FARID GUNAWAN</div>
<div class="c2 d r" style="left:1242px;top:686px;width:110px;">5821913</div>
<div class="c2 d r" style="left:1354px;top:686px;width:62px;">29110</div>
<div class="c2 t" style="left:1421px;top:686px;width:400px;letter-spacing:0.14px">Tanpa Fasilitas</div>
<div style="position:absolute;left:634px;top:125px;width:846px;height:59px;border:2px solid #1f6e3f;box-shadow:0 0 0 1px #fff, inset 0 0 0 1px #fff"></div>
<div style="position:absolute;left:1479px;top:183px;width:6px;height:6px;background:#1f6e3f;border:1px solid #fff"></div>
<div style="position:absolute;left:602px;top:127px;width:20px;height:20px;background:#2c2b2e"><svg width="20" height="20" viewBox="0 0 20 20"><path d="M9.5 2.8 L17 16.8 L2 16.8 Z" fill="#e9a13b" stroke="#ffe1a0" stroke-width="1.3" stroke-linejoin="round"/><rect x="8.8" y="8" width="1.4" height="4.5" fill="#7a3f00"/><rect x="8.8" y="13.5" width="1.4" height="1.4" fill="#7a3f00"/></svg></div>
</div>
<div style="position:absolute;left:170px;top:978px;width:150px;height:10px;background:#fff"></div>
<div style="position:absolute;left:0;top:978px;width:185px;height:32px;background:#0f0c0b;border-top-right-radius:6px"></div>
<div style="position:absolute;left:302px;top:978px;width:1618px;height:32px;background:#0f0c0b;border-top-left-radius:6px"></div>
<div style="position:absolute;left:185px;top:988px;width:117px;height:22px;background:#0f0c0b"></div>
<svg class="ic" style="left:27px;top:988px" width="9" height="12" viewBox="0 0 9 12"><path d="M7 1 L2 6 L7 11" fill="none" stroke="#a9a9a9" stroke-width="1.2"/></svg>
<svg class="ic" style="left:60px;top:988px" width="9" height="12" viewBox="0 0 9 12"><path d="M2 1 L7 6 L2 11" fill="none" stroke="#e0e0e0" stroke-width="1.2"/></svg>
<div style="position:absolute;left:116px;top:982px;width:60px;height:24px;background:#ffc000;border-radius:4px"></div>
<div class="tx" style="left:124.6px;top:988.00px;font-size:12.6px;color:#1a1a1a;font-weight:normal;letter-spacing:0.2px">PPH 21</div>
<div style="position:absolute;left:185px;top:978px;width:117px;height:28px;background:#fff;border-radius:0 0 6px 6px"></div>
<div class="tx" style="left:193.7px;top:984.00px;font-size:13.6px;color:#333333;font-weight:normal;-webkit-text-stroke:0.3px #333;letter-spacing:0.1px">Karyawan Tetap</div>
<div style="position:absolute;left:193px;top:1001px;width:101px;height:2px;background:#1f7a4a"></div>
<div style="position:absolute;left:180px;top:985px;width:1px;height:18px;background:#5a5a5a"></div>
<div style="position:absolute;left:306px;top:985px;width:1px;height:18px;background:#5a5a5a"></div>
<div style="position:absolute;left:460px;top:985px;width:1px;height:18px;background:#5a5a5a"></div>
<div style="position:absolute;left:647px;top:985px;width:1px;height:18px;background:#5a5a5a"></div>
<div style="position:absolute;left:700px;top:985px;width:1px;height:18px;background:#5a5a5a"></div>
<div style="position:absolute;left:742px;top:985px;width:1px;height:18px;background:#5a5a5a"></div>
<div style="position:absolute;left:873px;top:985px;width:1px;height:18px;background:#5a5a5a"></div>
<div class="tx" style="left:320px;top:987.00px;font-size:14px;color:#f0f0f0;font-weight:normal;letter-spacing:-0.25px">A1-Karyawan Resign</div>
<div class="tx" style="left:475px;top:987.00px;font-size:14px;color:#f0f0f0;font-weight:normal;letter-spacing:-0.12px">Karyawan NIK Tidak Valid</div>
<div class="tx" style="left:660.2px;top:987.00px;font-size:14px;color:#f0f0f0;font-weight:normal;letter-spacing:-1.0px">PPN</div>
<div class="tx" style="left:712px;top:987.00px;font-size:14px;color:#f0f0f0;font-weight:normal;letter-spacing:-0.5px">A2</div>
<div class="tx" style="left:756.4px;top:987.00px;font-size:13.3px;color:#f0f0f0;font-weight:normal;letter-spacing:-0.25px">PREPAID PPH 23</div>
<svg class="ic" style="left:892px;top:991px" width="13" height="4" viewBox="0 0 13 4"><circle cx="2" cy="2" r="1.3" fill="#e0e0e0"/><circle cx="6.5" cy="2" r="1.3" fill="#e0e0e0"/><circle cx="11" cy="2" r="1.3" fill="#e0e0e0"/></svg>
<svg class="ic" style="left:924px;top:987px" width="13" height="13" viewBox="0 0 13 13"><path d="M6.5 0.5 V12.5 M0.5 6.5 H12.5" stroke="#e0e0e0" stroke-width="1.2"/></svg>
<svg class="ic" style="left:961px;top:987px" width="4" height="13" viewBox="0 0 4 13"><circle cx="2" cy="1.5" r="1.1" fill="#e0e0e0"/><circle cx="2" cy="6.5" r="1.1" fill="#e0e0e0"/><circle cx="2" cy="11.5" r="1.1" fill="#e0e0e0"/></svg>
<svg class="ic" style="left:983px;top:988px" width="9" height="11" viewBox="0 0 9 11"><path d="M8 1 V10 L1 5.5 Z" fill="#a0a0a0"/></svg>
<div style="position:absolute;left:996px;top:989px;width:841px;height:9px;border-radius:5px;background:#9e9e9e"></div>
<svg class="ic" style="left:1888px;top:988px" width="9" height="11" viewBox="0 0 9 11"><path d="M1 1 V10 L8 5.5 Z" fill="#a0a0a0"/></svg>
<div style="position:absolute;left:0;top:1010px;width:1920px;height:1px;background:#45413f"></div>
<div style="position:absolute;left:0;top:1011px;width:1920px;height:21px;background:#161414"></div>
<div class="tx" style="left:11.3px;top:1017.00px;font-size:11.15px;color:#f0f0f0;font-weight:normal;">Select destination and press ENTER or choose Paste</div>
<div class="tx" style="left:1334px;top:1015.00px;font-size:10.9px;color:#f0f0f0;font-weight:normal;">Average: 2217238</div>
<div class="tx" style="left:1460.5px;top:1015.00px;font-size:10.9px;color:#f0f0f0;font-weight:normal;">Count: 32</div>
<div class="tx" style="left:1526px;top:1015.00px;font-size:10.9px;color:#f0f0f0;font-weight:normal;">Sum: 17737904</div>
<div style="position:absolute;left:1620px;top:1011px;width:39px;height:20px;background:#2c2a28"></div>
<svg class="ic" style="left:1632px;top:1014px" width="15" height="14" viewBox="0 0 15 14"><path d="M0.6 0.6 H14.4 V13.4 H0.6 Z M0.6 4.9 H14.4 M0.6 9.1 H14.4 M5.2 0.6 V13.4 M9.8 0.6 V13.4" fill="none" stroke="#e6e6e6" stroke-width="1.1"/></svg>
<svg class="ic" style="left:1673px;top:1014px" width="15" height="14" viewBox="0 0 15 14"><rect x="0.6" y="0.6" width="13.8" height="12.8" fill="none" stroke="#e6e6e6" stroke-width="1.1"/><rect x="3.5" y="3" width="8" height="8" fill="none" stroke="#e6e6e6" stroke-width="1"/><path d="M5 5.5 H10 M5 7.5 H10" stroke="#e6e6e6" stroke-width="0.9"/></svg>
<svg class="ic" style="left:1712px;top:1014px" width="15" height="14" viewBox="0 0 15 14"><path d="M0.6 0.6 H14.4 V13.4 H0.6 Z M7.5 0.6 V7 H14.4" fill="none" stroke="#e6e6e6" stroke-width="1.1"/></svg>
<div style="position:absolute;left:1745px;top:1020px;width:9px;height:1px;background:#e0e0e0"></div>
<div style="position:absolute;left:1758px;top:1020px;width:101px;height:1px;background:#9a9a9a"></div>
<div style="position:absolute;left:1807px;top:1016px;width:5px;height:11px;background:#c8c8c8;border-radius:1px"></div>
<svg class="ic" style="left:1863px;top:1015px" width="10" height="10" viewBox="0 0 10 10"><path d="M5 0.5 V9.5 M0.5 5 H9.5" stroke="#e0e0e0" stroke-width="1.1"/></svg>
<div class="tx" style="left:1885px;top:1015.00px;font-size:10.9px;color:#f0f0f0;font-weight:normal;">100%</div>
<div style="position:absolute;left:0;top:1032px;width:1920px;height:48px;background:linear-gradient(90deg,#25211f 0%,#25201d 31%,#221c19 35%,#221d1a 67%,#232324 68%,#202427 72%,#222325 78%,#28211e 81%,#222222 85%,#202428 88.5%,#232424 92%,#2a2621 94%,#2d261c 100%)"></div>
<div style="position:absolute;left:0;top:1032px;width:1920px;height:1px;background:#4a4340"></div>
<svg class="ic" style="left:18px;top:1049px" width="27" height="18" viewBox="0 0 27 18"><path d="M6 17 H22 Q26 17 26 13 Q26 9.5 22 9.5 Q21 5 16 5 Q12 5 10.5 9 Q6 8.5 5 12 Q1 12.5 1.5 15 Q2 17 6 17 Z" fill="#cfe3f5" stroke="#9ec3e6" stroke-width="0.8"/></svg>
<div style="position:absolute;left:30px;top:1039px;width:16px;height:16px;border-radius:8px;background:#f08a8a"></div>
<div class="tx" style="left:30.0px;width:16px;text-align:center;top:1041.00px;font-size:10.5px;color:#3a1010;">3</div>
<div class="tx" style="left:50.5px;top:1043.00px;font-size:11.2px;color:#f5f5f5;font-weight:normal;">28°C</div>
<div class="tx" style="left:50.5px;top:1059.00px;font-size:11.4px;color:#e0e0e0;font-weight:normal;">Berawan</div>
<svg class="ic" style="left:639px;top:1045px" width="24" height="24" viewBox="0 0 24 24"><defs><linearGradient id="wg" x1="0" y1="0" x2="1" y2="1"><stop offset="0" stop-color="#6fd3ff"/><stop offset="1" stop-color="#1b8fe8"/></linearGradient></defs><rect x="0" y="0" width="11.3" height="11.3" rx="1" fill="url(#wg)"/><rect x="12.7" y="0" width="11.3" height="11.3" rx="1" fill="url(#wg)"/><rect x="0" y="12.7" width="11.3" height="11.3" rx="1" fill="url(#wg)"/><rect x="12.7" y="12.7" width="11.3" height="11.3" rx="1" fill="url(#wg)"/></svg>
<div style="position:absolute;left:675px;top:1040px;width:220px;height:32px;border-radius:16px;background:linear-gradient(90deg,#3b3532,#433c38 60%,#3e3633);border:1px solid #55504c;box-sizing:border-box"></div>
<svg class="ic" style="left:687px;top:1048px" width="15" height="16" viewBox="0 0 15 16"><circle cx="6.5" cy="6.5" r="5.3" fill="none" stroke="#e8e8e8" stroke-width="1.5"/><path d="M10.3 10.5 L14 14.5" stroke="#e8e8e8" stroke-width="1.6"/></svg>
<div class="tx" style="left:712px;top:1049.00px;font-size:13.6px;color:#e0dcd8;font-weight:normal;">Search</div>
<svg class="ic" style="left:846px;top:1043px" width="43" height="27" viewBox="0 0 43 27"><ellipse cx="22" cy="23" rx="20" ry="3.5" fill="#d8c3a0"/><path d="M6 7 L10 3 L13 6 L30 8 Q34 9 34 14 L33 22 M14 14 L14 22 M18 14 L18 22 M28 14 L29 22" fill="none" stroke="#c8c8d8" stroke-width="2"/><path d="M9 8 Q18 12 32 11" stroke="#50506a" stroke-width="3" fill="none" stroke-dasharray="2 2"/></svg>
<svg class="ic" style="left:907px;top:1044px" width="25" height="23" viewBox="0 0 25 23"><rect x="0" y="7" width="17" height="15" rx="1.5" fill="#6d6d6d"/><rect x="7" y="0" width="17" height="15" rx="1.5" fill="#f0f0f0"/><rect x="7" y="7" width="10" height="8" fill="#b8b8b8"/></svg>
<svg class="ic" style="left:950px;top:1045px" width="26" height="22" viewBox="0 0 26 22"><path d="M0 2 Q0 0 2 0 H9 L12 3 H24 Q26 3 26 5 V20 Q26 22 24 22 H2 Q0 22 0 20 Z" fill="#f4c542"/><rect x="0" y="6" width="26" height="16" rx="2" fill="#ffd95a"/><rect x="6" y="13" width="14" height="9" rx="1" fill="#2a7fd4"/></svg>
<div style="position:absolute;left:960px;top:1073px;width:6px;height:3px;border-radius:2px;background:#9a9a9a"></div>
<svg class="ic" style="left:995px;top:1045px" width="25" height="24" viewBox="0 0 25 24"><defs><linearGradient id="eg" x1="0" y1="1" x2="1" y2="0"><stop offset="0" stop-color="#0c59a4"/><stop offset="1" stop-color="#2ed17a"/></linearGradient></defs><circle cx="12.5" cy="12" r="11.5" fill="url(#eg)"/><path d="M5 14 Q6 6 14 6 Q21 6 21 12 Q21 15 16 15 H9 Q10 20 16 20 Q19 20 21 19 Q17 24 11 23 Q4 21 5 14 Z" fill="#3ba4f0"/><ellipse cx="14" cy="12" rx="4" ry="2.2" fill="#1a3d6a"/></svg>
<svg class="ic" style="left:1039px;top:1044px" width="24" height="24" viewBox="0 0 24 24"><path d="M8 5 Q8 1 12 1 Q16 1 16 5" fill="none" stroke="#e8e8e8" stroke-width="1.4"/><rect x="1" y="5" width="22" height="18" rx="3" fill="#f2f2f2"/><rect x="7" y="10" width="4.5" height="4.5" fill="#f25022"/><rect x="12.5" y="10" width="4.5" height="4.5" fill="#7fba00"/><rect x="7" y="15.5" width="4.5" height="4.5" fill="#00a4ef"/><rect x="12.5" y="15.5" width="4.5" height="4.5" fill="#ffb900"/></svg>
<svg class="ic" style="left:1082px;top:1044px" width="25" height="25" viewBox="0 0 25 25"><path d="M12.5 1.5 A11 11 0 1 1 5 20 L1.5 23.5 L2.8 17.8 A11 11 0 0 1 12.5 1.5 Z" fill="none" stroke="#3ecf62" stroke-width="2.2"/><path d="M8 7.5 Q7 9.5 9 13 Q12 17 16 18 Q18 18 18.5 16 L16 14.5 L14.5 15.5 Q11.5 14 10 10.5 L11 9 L9.8 6.5 Q8.8 6.5 8 7.5 Z" fill="#3ecf62"/></svg>
<svg class="ic" style="left:1127px;top:1044px" width="25" height="25" viewBox="0 0 25 25"><circle cx="12.5" cy="12.5" r="12" fill="#db4437"/><path d="M12.5 12.5 L2.1 6.5 A12 12 0 0 0 12.5 24.5 Z" fill="#0f9d58"/><path d="M12.5 12.5 L12.5 24.5 A12 12 0 0 0 22.9 6.5 Z" fill="#ffcd40"/><circle cx="12.5" cy="12.5" r="5.5" fill="#fff"/><circle cx="12.5" cy="12.5" r="4.3" fill="#4285f4"/></svg>
<div style="position:absolute;left:1136px;top:1073px;width:6px;height:3px;border-radius:2px;background:#9a9a9a"></div>
<svg class="ic" style="left:1171px;top:1044px" width="25" height="25" viewBox="0 0 25 25"><circle cx="12.5" cy="12.5" r="12" fill="#e5343e"/><path d="M7 19 L12.5 6 L18 19 M12.5 6 L12.5 6" fill="none" stroke="#fff" stroke-width="2.4" stroke-linejoin="round"/></svg>
<svg class="ic" style="left:1215px;top:1045px" width="24" height="24" viewBox="0 0 24 24"><rect x="0" y="0" width="24" height="24" rx="2" fill="#ef443b"/><path d="M6 12 L10 8 L14 12 L10 16 Z M11 12 L15 8 L19 12 L15 16 Z" fill="#fff"/></svg>
<div style="position:absolute;left:1252px;top:1036px;width:38px;height:38px;border-radius:4px;background:#2c2a29;border:1px solid #3a3836;box-sizing:border-box"></div>
<svg class="ic" style="left:1258px;top:1045px" width="23" height="22" viewBox="0 0 23 22"><rect x="5" y="0" width="18" height="22" rx="2" fill="#21a366"/><rect x="5" y="0" width="18" height="7" rx="2" fill="#33c481"/><rect x="5" y="15" width="18" height="7" rx="2" fill="#107c41"/><rect x="0" y="5" width="12" height="12" rx="1.5" fill="#185c37"/><path d="M3 8 L9 14 M9 8 L3 14" stroke="#fff" stroke-width="1.6"/></svg>
<div style="position:absolute;left:1263px;top:1073px;width:16px;height:3px;border-radius:2px;background:#5cc8ff"></div>
<svg class="ic" style="left:1696px;top:1052px" width="13" height="8"><path d="M1 7 L6.5 1 L12 7" fill="none" stroke="#f0f0f0" stroke-width="1.4"/></svg>
<svg class="ic" style="left:1725px;top:1048px" width="18" height="15" viewBox="0 0 18 15"><path d="M3 13 H14 Q17 13 17 10 Q17 7 14 7 Q13 3 9 3 Q5.5 3 5 6.5 Q1 6.5 1 10 Q1 13 3 13 Z" fill="#8a8a8a"/><path d="M1 1 L16.5 14.5" stroke="#e8e8e8" stroke-width="1.1"/></svg>
<svg class="ic" style="left:1758px;top:1047px" width="17" height="17" viewBox="0 0 17 17"><rect x="0.6" y="1.6" width="10" height="9" fill="none" stroke="#f0f0f0" stroke-width="1.1"/><path d="M5.5 11 V14 M2.5 14.5 H9" stroke="#f0f0f0" stroke-width="1.1"/><rect x="11.5" y="0.6" width="4" height="5" rx="1" fill="none" stroke="#f0f0f0" stroke-width="1.1"/><path d="M13.5 5.5 V16" stroke="#f0f0f0" stroke-width="1.1"/></svg>
<svg class="ic" style="left:1782px;top:1049px" width="17" height="14" viewBox="0 0 17 14"><path d="M1 4.5 H4 L8 1 V13 L4 9.5 H1 Z" fill="none" stroke="#f0f0f0" stroke-width="1.1"/><path d="M10.5 4.5 Q12 7 10.5 9.5 M12.5 3 Q15 7 12.5 11 M14.5 1.5 Q18 7 14.5 12.5" fill="none" stroke="#f0f0f0" stroke-width="1.1"/></svg>
<div class="tx" style="left:1848.9px;top:1043.00px;font-size:11.4px;color:#f5f5f5;font-weight:normal;letter-spacing:0.3px">10:47</div>
<div class="tx" style="left:1815.7px;top:1059.00px;font-size:11.4px;color:#f5f5f5;font-weight:normal;letter-spacing:0.5px">31/01/2026</div>
<svg class="ic" style="left:1885px;top:1048px" width="15" height="15" viewBox="0 0 15 15"><path d="M2 11.5 V6.5 Q2 1 7.5 1 Q13 1 13 6.5 V11.5 L14.5 12.5 H0.5 Z" fill="none" stroke="#f0f0f0" stroke-width="1.1"/><path d="M5.5 13 Q7.5 15.5 9.5 13" fill="none" stroke="#f0f0f0" stroke-width="1.1"/></svg>
</body></html>
